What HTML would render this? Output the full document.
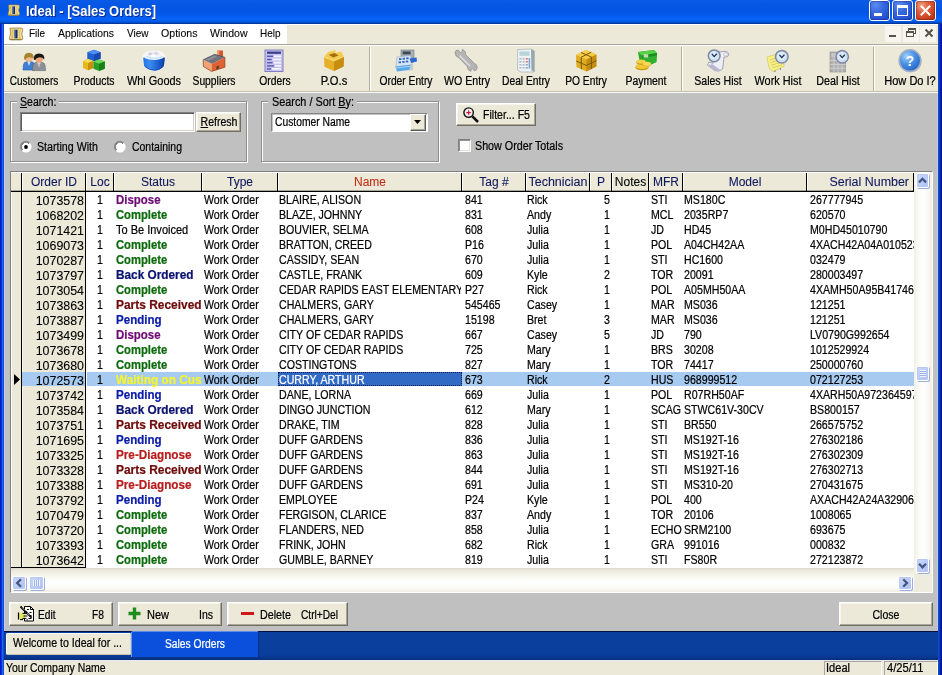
<!DOCTYPE html>
<html><head><meta charset="utf-8"><title>Ideal - [Sales Orders]</title>
<style>
html,body{margin:0;padding:0}
body{width:942px;height:675px;overflow:hidden;position:relative;background:#C0C0C0;font-family:"Liberation Sans",sans-serif;color:#000}
.a{position:absolute;box-sizing:border-box}
.t{position:absolute;white-space:nowrap;box-sizing:border-box;-webkit-text-stroke:0.22px}
u{text-decoration:underline}
svg{position:absolute;overflow:visible}
#root{position:absolute;left:0;top:0;width:942px;height:675px;overflow:hidden;will-change:transform}

.btn{position:absolute;box-sizing:border-box;background:#ECE9D8;border:1px solid;border-color:#fff #716F64 #716F64 #fff;box-shadow:inset -1px -1px 0 #ACA899, inset 1px 1px 0 #F6F5EE}
.sunk{position:absolute;box-sizing:border-box;border:1px solid;border-color:#808080 #fff #fff #808080;box-shadow:inset 1px 1px 0 #5C5C5C, inset -1px -1px 0 #D4D0C8}
.grp{position:absolute;box-sizing:border-box;border:1px solid #8E8E8E;box-shadow:1px 1px 0 #fff, inset 1px 1px 0 #fff}
.hc{position:absolute;box-sizing:border-box;background:#ECE9D8;border-right:1px solid #000;border-left:1px solid #fff;border-top:1px solid #fff;top:172px;height:18px}

</style></head><body><div id="root">
<div class="a" style="left:0px;top:0px;width:942px;height:24px;background:linear-gradient(to bottom,#0A5BE6 0%,#0557E4 20%,#0355E3 45%,#0458EC 60%,#0662F8 78%,#0660F0 86%,#0450D2 93%,#013DA5 97%,#002E8E 100%);"></div>
<div class="a" style="left:0px;top:24px;width:1px;height:651px;background:#0019CF;"></div>
<div class="a" style="left:1px;top:24px;width:1px;height:651px;background:#0A34D8;"></div>
<div class="a" style="left:2px;top:24px;width:1px;height:651px;background:#1E64F0;"></div>
<div class="a" style="left:3px;top:24px;width:1px;height:651px;background:#1050C4;"></div>
<div class="a" style="left:938px;top:24px;width:1px;height:651px;background:#1648C2;"></div>
<div class="a" style="left:939px;top:24px;width:1px;height:651px;background:#0A3CC8;"></div>
<div class="a" style="left:940px;top:24px;width:1px;height:651px;background:#0020AE;"></div>
<div class="a" style="left:941px;top:24px;width:1px;height:651px;background:#001498;"></div>
<div class="a" style="left:4px;top:24px;width:934px;height:20px;background:#ECE9D8;"></div>
<div class="a" style="left:4px;top:24px;width:283px;height:20px;background:#FFFFFF;"></div>
<div class="a" style="left:4px;top:24px;width:934px;height:1px;background:#FFFFFF;"></div>
<div class="a" style="left:4px;top:44px;width:934px;height:1px;background:#ACA899;"></div>
<div class="a" style="left:4px;top:45px;width:934px;height:1px;background:#FFFFFF;"></div>
<div class="a" style="left:4px;top:46px;width:934px;height:45px;background:#ECE9D8;"></div>
<div class="a" style="left:4px;top:91px;width:934px;height:1px;background:#C2BFAC;"></div>
<div class="a" style="left:4px;top:92px;width:934px;height:1px;background:#FAFAF6;"></div>
<div class="a" style="left:4px;top:93px;width:934px;height:538px;background:#C0C0C0;"></div>
<div class="a" style="left:4px;top:93px;width:1px;height:538px;background:#BCCDF0;"></div>
<div class="a" style="left:937px;top:93px;width:1px;height:538px;background:#BCC8F0;"></div>
<div class="grp" style="left:10px;top:101px;width:237px;height:61px"></div>
<div class="grp" style="left:261px;top:101px;width:178px;height:61px"></div>
<div class="a" style="left:4px;top:631px;width:934px;height:1px;background:#06103C;"></div>
<div class="a" style="left:4px;top:632px;width:934px;height:28px;background:linear-gradient(to bottom,#0A3F9E 0,#0A3F9E 82%,#082E7C 100%);"></div>
<div class="a" style="left:4px;top:660px;width:934px;height:15px;background:#ECE9D8;"></div>
<div class="a" style="left:4px;top:660px;width:934px;height:1px;background:#E4E8F0;"></div>
<svg style="left:6.8px;top:4px" width="13.5" height="12.4" viewBox="0 0 16 16" preserveAspectRatio="none">
<path d="M2.2 2.6 Q1 1.2 3 1.2 L13.4 1.2 Q15.6 1.6 14.6 4 L13.8 8 L14.8 12 Q15.4 14.6 13 14.8 L2.8 14.8 Q.4 14.4 1.6 12 L2.4 8 Z" fill="#F0E0A0" stroke="#9C8440" stroke-width=".9"/>
<path d="M3.4 2.6 L5.6 2.2 L5.2 13.8 L3 13.4 L3.8 8 Z" fill="#E0C050"/>
<path d="M10.4 2.2 L12.8 2.6 L12.2 8 L13 13.4 L10.8 13.8 Z" fill="#E8CC68"/>
<rect x="6" y="2.4" width="4" height="11.2" fill="#FBF4D4"/>
<rect x="6.4" y="3" width="3.2" height="10" fill="#1C2C64"/>
<rect x="7" y="3.6" width="1" height="8.8" fill="#3C5C9C"/>
<path d="M2 14.2 H13.6" stroke="#7C6828" stroke-width=".8"/>
</svg>
<div class="t" style="top:2.77px;font-size:14px;line-height:17px;color:#fff;font-weight:bold;left:26.3px;transform-origin:0 50%;transform:scaleX(0.9282);text-shadow:1px 1px 0 #0A2A8A;-webkit-text-stroke:0;">Ideal - [Sales Orders]</div>
<div class="a" style="left:869px;top:0px;width:21px;height:21px;border:1px solid #fff;border-radius:3px;background:radial-gradient(circle at 30% 20%,#5C8CF0 0%,#3768E0 40%,#2350D0 80%,#1C46C0 100%);box-shadow:inset 0 0 1px 1px rgba(0,0,60,.25)"></div>
<div class="a" style="left:892px;top:0px;width:21px;height:21px;border:1px solid #fff;border-radius:3px;background:radial-gradient(circle at 30% 20%,#5C8CF0 0%,#3768E0 40%,#2350D0 80%,#1C46C0 100%);box-shadow:inset 0 0 1px 1px rgba(0,0,60,.25)"></div>
<div class="a" style="left:915px;top:0px;width:21px;height:21px;border:1px solid #fff;border-radius:3px;background:radial-gradient(circle at 30% 25%,#F0A080 0%,#E0603C 35%,#C83C18 75%,#B03010 100%);box-shadow:inset 0 0 1px 1px rgba(0,0,60,.25)"></div>
<div class="a" style="left:874px;top:13px;width:8px;height:3px;background:#fff;"></div>
<div class="a" style="left:897px;top:5px;width:11px;height:11px;border:1px solid #fff;border-top:3px solid #fff;"></div>
<svg style="left:915px;top:0px" width="21" height="21" viewBox="0 0 21 21"><path d="M5.8 5.8 L15.2 15.2 M15.2 5.8 L5.8 15.2" stroke="#fff" stroke-width="2" stroke-linecap="butt"/></svg>
<svg style="left:8px;top:27px" width="16" height="14" viewBox="0 0 16 16" preserveAspectRatio="none">
<path d="M2.2 2.6 Q1 1.2 3 1.2 L13.4 1.2 Q15.6 1.6 14.6 4 L13.8 8 L14.8 12 Q15.4 14.6 13 14.8 L2.8 14.8 Q.4 14.4 1.6 12 L2.4 8 Z" fill="#F0E0A0" stroke="#9C8440" stroke-width=".9"/>
<path d="M3.4 2.6 L5.6 2.2 L5.2 13.8 L3 13.4 L3.8 8 Z" fill="#E0C050"/>
<path d="M10.4 2.2 L12.8 2.6 L12.2 8 L13 13.4 L10.8 13.8 Z" fill="#E8CC68"/>
<rect x="6" y="2.4" width="4" height="11.2" fill="#FBF4D4"/>
<rect x="6.4" y="3" width="3.2" height="10" fill="#1C2C64"/>
<rect x="7" y="3.6" width="1" height="8.8" fill="#3C5C9C"/>
<path d="M2 14.2 H13.6" stroke="#7C6828" stroke-width=".8"/>
</svg>
<div class="t" style="top:26.36px;font-size:11px;line-height:14px;left:29px;transform-origin:0 50%;transform:scaleX(0.9028);-webkit-text-stroke:0.1px;">File</div>
<div class="t" style="top:26.36px;font-size:11px;line-height:14px;left:58px;transform-origin:0 50%;transform:scaleX(0.9442);-webkit-text-stroke:0.1px;">Applications</div>
<div class="t" style="top:26.36px;font-size:11px;line-height:14px;left:126.5px;transform-origin:0 50%;transform:scaleX(0.9093);-webkit-text-stroke:0.1px;">View</div>
<div class="t" style="top:26.36px;font-size:11px;line-height:14px;left:160.5px;transform-origin:0 50%;transform:scaleX(0.9629);-webkit-text-stroke:0.1px;">Options</div>
<div class="t" style="top:26.36px;font-size:11px;line-height:14px;left:209.5px;transform-origin:0 50%;transform:scaleX(0.9585);-webkit-text-stroke:0.1px;">Window</div>
<div class="t" style="top:26.36px;font-size:11px;line-height:14px;left:259.5px;transform-origin:0 50%;transform:scaleX(0.9062);-webkit-text-stroke:0.1px;">Help</div>
<div class="a" style="left:885px;top:26px;width:16px;height:16px;background:#F6F5EF;"></div>
<div class="a" style="left:903px;top:26px;width:16px;height:16px;background:#F6F5EF;"></div>
<div class="a" style="left:920px;top:26px;width:16px;height:16px;background:#F6F5EF;"></div>
<div class="a" style="left:889px;top:35px;width:7px;height:2px;background:#55534A;"></div>
<div class="a" style="left:908px;top:28px;width:8px;height:6px;border:1px solid #55534A;border-top-width:2px;"></div>
<div class="a" style="left:906px;top:31px;width:8px;height:6px;border:1px solid #55534A;border-top-width:2px;background:#F6F5EF;"></div>
<svg style="left:921px;top:25px" width="16" height="16" viewBox="0 0 16 16"><path d="M4.5 4.5 L11.5 11.5 M11.5 4.5 L4.5 11.5" stroke="#55534A" stroke-width="2"/></svg>
<div class="a" style="left:369px;top:47px;width:1px;height:44px;background:#B4B19E;"></div>
<div class="a" style="left:370px;top:47px;width:1px;height:44px;background:#FFFFFF;"></div>
<div class="a" style="left:681px;top:47px;width:1px;height:44px;background:#B4B19E;"></div>
<div class="a" style="left:682px;top:47px;width:1px;height:44px;background:#FFFFFF;"></div>
<div class="a" style="left:873px;top:47px;width:1px;height:44px;background:#B4B19E;"></div>
<div class="a" style="left:874px;top:47px;width:1px;height:44px;background:#FFFFFF;"></div>
<div class="t" style="top:73.53px;font-size:12px;line-height:15px;left:-116px;width:300px;text-align:center;transform-origin:50% 50%;transform:scaleX(0.8360);">Customers</div>
<div class="t" style="top:73.53px;font-size:12px;line-height:15px;left:-56px;width:300px;text-align:center;transform-origin:50% 50%;transform:scaleX(0.8658);">Products</div>
<div class="t" style="top:73.53px;font-size:12px;line-height:15px;left:3.5px;width:300px;text-align:center;transform-origin:50% 50%;transform:scaleX(0.9098);">Whl Goods</div>
<div class="t" style="top:73.53px;font-size:12px;line-height:15px;left:64px;width:300px;text-align:center;transform-origin:50% 50%;transform:scaleX(0.8595);">Suppliers</div>
<div class="t" style="top:73.53px;font-size:12px;line-height:15px;left:124.5px;width:300px;text-align:center;transform-origin:50% 50%;transform:scaleX(0.8589);">Orders</div>
<div class="t" style="top:73.53px;font-size:12px;line-height:15px;left:184px;width:300px;text-align:center;transform-origin:50% 50%;transform:scaleX(0.9311);">P.O.s</div>
<div class="t" style="top:73.53px;font-size:12px;line-height:15px;left:256px;width:300px;text-align:center;transform-origin:50% 50%;transform:scaleX(0.8546);">Order Entry</div>
<div class="t" style="top:73.53px;font-size:12px;line-height:15px;left:317px;width:300px;text-align:center;transform-origin:50% 50%;transform:scaleX(0.8845);">WO Entry</div>
<div class="t" style="top:73.53px;font-size:12px;line-height:15px;left:376px;width:300px;text-align:center;transform-origin:50% 50%;transform:scaleX(0.8568);">Deal Entry</div>
<div class="t" style="top:73.53px;font-size:12px;line-height:15px;left:436px;width:300px;text-align:center;transform-origin:50% 50%;transform:scaleX(0.8525);">PO Entry</div>
<div class="t" style="top:73.53px;font-size:12px;line-height:15px;left:495.5px;width:300px;text-align:center;transform-origin:50% 50%;transform:scaleX(0.8658);">Payment</div>
<div class="t" style="top:73.53px;font-size:12px;line-height:15px;left:568px;width:300px;text-align:center;transform-origin:50% 50%;transform:scaleX(0.8793);">Sales Hist</div>
<div class="t" style="top:73.53px;font-size:12px;line-height:15px;left:627.5px;width:300px;text-align:center;transform-origin:50% 50%;transform:scaleX(0.9077);">Work Hist</div>
<div class="t" style="top:73.53px;font-size:12px;line-height:15px;left:688px;width:300px;text-align:center;transform-origin:50% 50%;transform:scaleX(0.8936);">Deal Hist</div>
<div class="t" style="top:73.53px;font-size:12px;line-height:15px;left:760px;width:300px;text-align:center;transform-origin:50% 50%;transform:scaleX(0.9193);">How Do I?</div>
<svg style="left:0;top:0" width="942" height="92" viewBox="0 0 942 92"><g>
<path d="M23 70 L23.5 64.5 Q24 62 27 61.5 L31 61.5 Q34 62 34.5 64.5 L35 70 Z" fill="#3F7FD8" stroke="#2458A8" stroke-width=".6"/>
<path d="M27.5 62 L29 66 L30.5 62 Z" fill="#CFE0F8"/>
<circle cx="29" cy="58" r="3.9" fill="#F2B98C"/>
<path d="M24.2 59.6 Q23.4 52.8 29 52.8 Q34.2 52.8 33.6 58.8 Q31.6 56.8 28.6 57.2 Q26.4 57.4 25.6 59.8 Z" fill="#A8842C"/>
<path d="M32.5 70.6 L33 65 Q33.6 62.6 36.5 62.2 L41.5 62.2 Q44.6 62.6 45 65 L45.5 70.6 Z" fill="#8C9098" stroke="#60646C" stroke-width=".6"/>
<path d="M37.3 62.6 L39 67.5 L40.7 62.6 Z" fill="#F4F4F4"/><path d="M38.6 63.5 L39 67 L39.4 63.5 Z" fill="#B02020"/>
<circle cx="39" cy="58.6" r="4.2" fill="#EFA57C"/>
<path d="M33.9 59.8 Q33.2 53.4 39 53.4 Q45 53.4 44.3 59.6 Q42.4 57 38.8 57.4 Q36 57.6 35.2 60 Z" fill="#181818"/>
</g><g>
<path d="M87.3 52.2 L94 49.8 L100.6 52.2 L100.6 58.8 L94 61.2 L87.3 58.8 Z" fill="#1F5FD0"/>
<path d="M87.3 52.2 L94 49.8 L100.6 52.2 L94 54.4 Z" fill="#4F8FF0"/>
<path d="M94 54.4 L100.6 52.2 L100.6 58.8 L94 61.2 Z" fill="#1848B0"/>
<path d="M83 61 L88 59 L93.2 61 L93.2 68 L88 70.2 L83 68 Z" fill="#E8B818"/>
<path d="M83 61 L88 59 L93.2 61 L88 63 Z" fill="#F8DC58"/>
<path d="M88 63 L93.2 61 L93.2 68 L88 70.2 Z" fill="#C89008"/>
<path d="M93.4 61.6 L99 59.6 L104.8 61.6 L104.8 68.8 L99 71 L93.4 68.8 Z" fill="#28A028"/>
<path d="M93.4 61.6 L99 59.6 L104.8 61.6 L99 63.8 Z" fill="#68D858"/>
<path d="M99 63.8 L104.8 61.6 L104.8 68.8 L99 71 Z" fill="#188018"/>
</g><g>
<defs><linearGradient id="tubg" x1="0" x2="1" y1="0" y2="0"><stop offset="0" stop-color="#2474E4"/><stop offset=".3" stop-color="#3C8CF0"/><stop offset=".7" stop-color="#1C60D0"/><stop offset="1" stop-color="#0C3C98"/></linearGradient></defs>
<path d="M142.4 58 Q142.6 53 148 51.4 Q154 49.4 160.4 51.4 Q165.6 53 165.6 58 L164.8 66.6 Q159 72 154 71.2 Q148 71 143.4 66.6 Z" fill="#FFFFFF" opacity=".75"/>
<path d="M143.2 58.6 Q143 57 144.6 57 L163.6 57 Q165 57 164.9 58.6 L164 66 Q159 71.2 154 70.6 Q148 70.4 144 66 Z" fill="url(#tubg)"/>
<path d="M144.4 58 Q144 54 148 52.2 Q154 50 160 52.2 Q164 54 163.6 58 Q154 61.8 144.4 58 Z" fill="#F2F5FA"/>
<path d="M146 56.4 Q154 60 162.4 56.6" fill="none" stroke="#BFE0FA" stroke-width="1.2"/>
<ellipse cx="150.4" cy="54" rx="2.4" ry="1.4" fill="#D6CCD8"/><ellipse cx="156" cy="53.4" rx="2.6" ry="1.5" fill="#DCD4E0"/><ellipse cx="153.4" cy="55.8" rx="2.6" ry="1.2" fill="#FFFFFF"/>
<path d="M145 66.4 Q149 70 154 70.2 Q159 70.6 163.4 66.6" fill="none" stroke="#0A3A94" stroke-width=".8" opacity=".7"/>
</g><g>
<path d="M217 50.4 L223 50.4 L223 58 L217 56.6 Z" fill="#D4542C"/><path d="M217 50.4 L219.4 50.4 L219.4 57 L217 56.6 Z" fill="#F09468"/>
<path d="M203.2 59.8 L214.7 54.3 L224.9 57.3 L212 63.9 Z" fill="#70727C"/>
<path d="M206 59.6 L214.4 55.6 L217 56.4 L208.6 60.8 Z" fill="#9498A8" opacity=".8"/>
<path d="M203.2 59.8 L212 63.9 L211.6 71.4 L203.4 66.5 Z" fill="#F2A272"/>
<path d="M212 63.9 L224.9 57.3 L224.9 67.2 L211.6 71.4 Z" fill="#DE6234"/>
<path d="M216.4 66.4 L218.8 65.4 L218.8 68.6 L216.4 69.8 Z" fill="#5A4418"/>
<path d="M203.2 59.8 L203.4 66.5 L211.6 71.4 L224.9 67.2 L224.9 57.3" fill="none" stroke="#8C3A1C" stroke-width=".7"/>
<path d="M203.2 59.8 L214.7 54.3 L224.9 57.3" fill="none" stroke="#4C4C54" stroke-width=".7"/>
</g><g>
<rect x="265" y="50" width="18" height="21.5" fill="#C4C0F0" stroke="#8480C0" stroke-width="1"/>
<rect x="267" y="51.6" width="14" height="2.2" fill="#3C3C88"/>
<g fill="#5858A8"><rect x="267" y="55.6" width="6" height="1.4"/><rect x="267" y="58.8" width="4.6" height="1.4"/><rect x="267" y="62" width="5.6" height="1.4"/><rect x="267" y="65.2" width="7" height="1.4"/><rect x="267" y="68.2" width="4" height="1.4"/></g>
<g fill="#F4F4FF"><rect x="274" y="55.4" width="7" height="1.8"/><rect x="272.6" y="58.6" width="8.4" height="1.8"/><rect x="273.6" y="61.8" width="7.4" height="1.8"/><rect x="275" y="65" width="6" height="1.8"/><rect x="272" y="68" width="9" height="1.8"/></g>
</g><g>
<path d="M324 57 L334 61 L344 56.4 L343.6 66.4 L334 71 L324.4 66.8 Z" fill="#E8B028"/>
<path d="M334 61 L344 56.4 L343.6 66.4 L334 71 Z" fill="#C88C10"/>
<path d="M324 57 L328 52 L336 50 L334.6 53 L341 51.6 L344 56.4 L334 61 Z" fill="#F4CC50"/>
<path d="M328.6 54.8 L334.6 53 L338.6 55.4 L333.2 57.6 Z" fill="#A87008"/>
<path d="M324 57 L334 61 L344 56.4" fill="none" stroke="#F8E088" stroke-width=".8"/>
</g><g>
<rect x="401" y="50" width="13" height="8" fill="#A8B0B8" stroke="#70787C" stroke-width=".6"/>
<rect x="402.6" y="51.4" width="8" height="3" fill="#404858"/>
<path d="M397 57 L410.5 55.5 L412.6 65 L396 67 Z" fill="#D8E4F0" stroke="#90A0B0" stroke-width=".5"/>
<g fill="#2C68C8"><rect x="399" y="58.2" width="2.4" height="1.8"/><rect x="402.6" y="57.8" width="2.4" height="1.8"/><rect x="406.2" y="57.4" width="2.4" height="1.8"/><rect x="398.6" y="61.4" width="2.4" height="1.8"/><rect x="402.2" y="61" width="2.4" height="1.8"/><rect x="405.8" y="60.6" width="2.4" height="1.8"/></g>
<path d="M395.4 66.4 L411.4 64.6 L412.6 69.4 L397 71.4 Z" fill="#58A8E8"/>
<path d="M396 68 L411.8 66" stroke="#A8D4F8" stroke-width="1"/>
<path d="M409.6 58.6 L416.6 57.4 L417 61.6 L411 63 Z" fill="#2C68D0"/>
<path d="M411 63.4 Q414 64 413 70 L409 71 Z" fill="#C8CCD0"/>
</g><g>
<path d="M455 52.6 Q455 50.4 458 50 L460.6 52.4 L462.8 51 L462 49.6 Q466 50.4 465.6 54.6 L474.6 63.6 Q477 64 477.2 67.6 Q477 70.6 474.6 71 L472.6 68.8 L470.6 70 L471 71.4 Q467.4 70.6 467.4 66.6 L458.6 57.6 Q455.4 57 455 52.6 Z" fill="#B4B4B4" stroke="#8C8C8C" stroke-width=".7"/>
<path d="M459.6 55.6 L470 66" stroke="#DCDCDC" stroke-width="1.6"/>
</g><g>
<path d="M517.6 49.6 L531 49 L534.4 51 L534.4 72 L521 72 L517.6 70 Z" fill="#EEF2F4" stroke="#A4B0B4" stroke-width=".7"/>
<path d="M531 49 L534.4 51 L534.4 72 L531.4 70.4 Z" fill="#98A8B0"/>
<rect x="519.4" y="51.4" width="10" height="4.4" fill="#B8D4D8"/>
<g fill="#B0BCC8"><rect x="519.4" y="58" width="2" height="1.6"/><rect x="522.6" y="58" width="2" height="1.6"/><rect x="519.4" y="61" width="2" height="1.6"/><rect x="522.6" y="61" width="2" height="1.6"/><rect x="519.4" y="64" width="2" height="1.6"/><rect x="522.6" y="64" width="2" height="1.6"/><rect x="519.4" y="67" width="2" height="1.6"/><rect x="522.6" y="67" width="2" height="1.6"/></g>
<g fill="#D87878"><rect x="525.8" y="58" width="2" height="1.6"/><rect x="525.8" y="61" width="2" height="1.6"/></g>
<g fill="#88A8D0"><rect x="525.8" y="64" width="2" height="1.6"/><rect x="525.8" y="67" width="2" height="1.6"/><rect x="528.6" y="58" width="1.6" height="10.6"/></g>
</g><g>
<path d="M576 55 L586 50 L596.4 54.4 L596.4 66.6 L586.4 71.4 L576.4 67 Z" fill="#E0AC20"/>
<path d="M576 55 L586 50 L596.4 54.4 L586.4 59.4 Z" fill="#F4CC48"/>
<path d="M586.4 59.4 L596.4 54.4 L596.4 66.6 L586.4 71.4 Z" fill="#C48C10"/>
<path d="M581 52.5 L591.4 57 L591.4 69 M591.2 52.2 L581.2 57.2 L581.4 69.2 M576.2 61 L586.4 65.4 L596.4 60.6" fill="none" stroke="#7C5808" stroke-width="1"/>
</g><g>
<path d="M638 52 L654 50 L657 53 L656.4 62 L650 65 L640 63.6 Z" fill="#28A828"/>
<path d="M638 52 L654 50 L657 53 L642 55.6 Z" fill="#58D048"/>
<path d="M642 55.6 L657 53 L656.4 57 L642.6 59.6 Z" fill="#1C8C1C"/>
<path d="M643 58 L656.4 55.6 L656.4 62 L650 65 L644 63 Z" fill="#30B030"/>
<rect x="643.6" y="54.2" width="4.6" height="3.4" fill="#D8E8D0" opacity=".85"/>
<ellipse cx="642" cy="67.6" rx="6.6" ry="2.6" fill="#C89410"/><ellipse cx="642" cy="66.4" rx="6.6" ry="2.6" fill="#F0C838"/>
<ellipse cx="641" cy="62.6" rx="4.6" ry="2.2" fill="#C89410"/><ellipse cx="641" cy="61.6" rx="4.6" ry="2.2" fill="#F4D048"/>
<ellipse cx="647" cy="64.6" rx="4" ry="2" fill="#D8A820"/><ellipse cx="647" cy="63.8" rx="4" ry="2" fill="#F8D858"/>
</g><g>
<path d="M713 52.4 L725 51.4 Q729.4 51.6 728.6 55.4 Q727.6 57.6 724 57 L722.6 69 Q719 72.4 714.6 70.6 L707.4 65 L709 62 L713 63.4 Z" fill="#EEEEF6" stroke="#9090A8" stroke-width=".8"/>
<path d="M707.4 65 L714.6 70.6 Q718 71.6 720 69.6 L712.4 64.2 Z" fill="#B8B8D0"/>
<ellipse cx="725.6" cy="54.4" rx="2" ry="1.6" fill="#F8F8FC" stroke="#9C9CB4" stroke-width=".6"/>
<circle cx="714.2" cy="55.8" r="5.9" fill="#C8DEEE" stroke="#8088A6" stroke-width="1.5"/><circle cx="713.8000000000001" cy="55.4" r="3.9000000000000004" fill="#DCEAF6"/><path d="M711.8000000000001 53.8 L714.2 56.599999999999994 L716.8000000000001 53.8" fill="none" stroke="#1C2C50" stroke-width="1.3"/></g><g>
<path d="M767 57 L779 53.6 L784.4 66 L773 71.6 Q769.6 70 768.6 66 Z" fill="#F8F088" stroke="#C8C058" stroke-width=".6"/>
<path d="M769.6 60 L779 57.2 M770.4 62.6 L780.4 59.6 M771.2 65.2 L781.6 62.2 M772.4 67.8 L782.4 64.8" stroke="#C8BC50" stroke-width=".7"/>
<circle cx="775" cy="71" r=".6" fill="#222"/><circle cx="780.4" cy="69" r=".6" fill="#222"/>
<circle cx="781.8" cy="56.8" r="6.3" fill="#C8DEEE" stroke="#8088A6" stroke-width="1.5"/><circle cx="781.4" cy="56.4" r="4.3" fill="#DCEAF6"/><path d="M779.4 54.8 L781.8 57.599999999999994 L784.4 54.8" fill="none" stroke="#1C2C50" stroke-width="1.3"/></g><g>
<rect x="830" y="52" width="15.6" height="20" fill="#B0B0B0" stroke="#8C8C8C" stroke-width=".6"/>
<g stroke="#D4D4D4" stroke-width=".8"><path d="M830 60.5 H845.6 M830 64.4 H845.6 M830 68.2 H845.6 M834 56 V72 M838 60 V72 M842 60 V72"/></g>
<rect x="831.4" y="53.4" width="6" height="3.6" fill="#C8C8C8"/>
<circle cx="842.2" cy="56.8" r="6.2" fill="#C8DEEE" stroke="#8088A6" stroke-width="1.5"/><circle cx="841.8000000000001" cy="56.4" r="4.2" fill="#DCEAF6"/><path d="M839.8000000000001 54.8 L842.2 57.599999999999994 L844.8000000000001 54.8" fill="none" stroke="#1C2C50" stroke-width="1.3"/></g><g>
<defs><radialGradient id="hg" cx="35%" cy="30%" r="75%"><stop offset="0" stop-color="#A4D0FA"/><stop offset=".5" stop-color="#4A90E4"/><stop offset="1" stop-color="#2462C4"/></radialGradient></defs>
<circle cx="910.4" cy="61.4" r="11.2" fill="#9CA4B0" opacity=".55"/>
<circle cx="910" cy="60.6" r="10.8" fill="url(#hg)" stroke="#A0AEC8" stroke-width="1.6"/>
<text x="910" y="65.6" font-family="Liberation Sans" font-weight="bold" font-size="14" fill="#fff" text-anchor="middle">?</text>
</g></svg>
<div class="a" style="left:17px;top:96px;width:42px;height:12px;background:#C0C0C0;"></div>
<div class="t" style="top:94.53px;font-size:12px;line-height:15px;left:20px;transform-origin:0 50%;transform:scaleX(0.8777);"><u>S</u>earch:</div>
<div class="a" style="left:268px;top:96px;width:89px;height:12px;background:#C0C0C0;"></div>
<div class="t" style="top:94.53px;font-size:12px;line-height:15px;left:271.7px;transform-origin:0 50%;transform:scaleX(0.9040);">Search / Sort <u>B</u>y:</div>
<div class="sunk" style="left:20px;top:112px;width:175px;height:20px;background:#fff"></div>
<div class="btn" style="left:196px;top:112px;width:45px;height:20px"></div>
<div class="t" style="top:114.53px;font-size:12px;line-height:15px;left:68.5px;width:300px;text-align:center;transform-origin:50% 50%;transform:scaleX(0.8806);"><u>R</u>efresh</div>
<svg style="left:20px;top:141px" width="12" height="12" viewBox="0 0 12 12"><circle cx="6" cy="6" r="5.6" fill="#FFFFFF"/><path d="M1.6 10 A5.6 5.6 0 0 1 10 1.6 L8.6 3 A3.8 3.8 0 0 0 3 8.6 Z" fill="#8C8C8C"/><path d="M2.6 9 A4.5 4.5 0 0 1 9 2.6 L8.6 3 A3.8 3.8 0 0 0 3 8.6 Z" fill="#5A5A5A"/><circle cx="6" cy="6" r="3.8" fill="#fff"/><circle cx="6" cy="6" r="1.9" fill="#000"/></svg>
<svg style="left:114px;top:141px" width="12" height="12" viewBox="0 0 12 12"><circle cx="6" cy="6" r="5.6" fill="#FFFFFF"/><path d="M1.6 10 A5.6 5.6 0 0 1 10 1.6 L8.6 3 A3.8 3.8 0 0 0 3 8.6 Z" fill="#8C8C8C"/><path d="M2.6 9 A4.5 4.5 0 0 1 9 2.6 L8.6 3 A3.8 3.8 0 0 0 3 8.6 Z" fill="#5A5A5A"/><circle cx="6" cy="6" r="3.8" fill="#fff"/></svg>
<div class="t" style="top:139.53px;font-size:12px;line-height:15px;left:37px;transform-origin:0 50%;transform:scaleX(0.8880);">Starting With</div>
<div class="t" style="top:139.53px;font-size:12px;line-height:15px;left:131.5px;transform-origin:0 50%;transform:scaleX(0.8715);">Containing</div>
<div class="a" style="left:271px;top:113px;width:157px;height:19px;background:#fff;border:1px solid;border-color:#858585 #fff #fff #858585;box-shadow:inset 1px 1px 0 #C4C4C4"></div>
<div class="t" style="top:115.03px;font-size:12px;line-height:15px;left:275px;transform-origin:0 50%;transform:scaleX(0.8585);">Customer Name</div>
<div class="a" style="left:410px;top:114px;width:16px;height:17px;background:#ECE9D8;border:1px solid;border-color:#fff #5A5A5A #5A5A5A #fff;box-shadow:inset -1px -1px 0 #A8A698"></div>
<svg style="left:414px;top:120px" width="7" height="4" viewBox="0 0 7 4"><path d="M0 0 H7 L3.5 4 Z" fill="#000"/></svg>
<div class="btn" style="left:456px;top:103px;width:80px;height:23px"></div>
<svg style="left:462px;top:106px" width="18" height="18" viewBox="0 0 18 18"><circle cx="6.6" cy="6.6" r="4.7" fill="#F6ECF0" stroke="#101010" stroke-width="1.4"/><path d="M4.4 6.6 H8.8 M6.6 4.4 V8.8" stroke="#C01838" stroke-width="1.2"/><path d="M10.4 10.4 L16 16" stroke="#101010" stroke-width="2.6" stroke-linecap="butt"/></svg>
<div class="t" style="top:107.93px;font-size:12px;line-height:15px;left:483px;transform-origin:0 50%;transform:scaleX(0.8811);">Filter... F5</div>
<div class="a" style="left:458px;top:139px;width:13px;height:13px;background:#fff;border:1px solid;border-color:#808080 #fff #fff #808080;box-shadow:inset 1px 1px 0 #909090, inset -1px -1px 0 #E4E2DA"></div>
<div class="t" style="top:138.53px;font-size:12px;line-height:15px;left:474.5px;transform-origin:0 50%;transform:scaleX(0.8935);">Show Order Totals</div>
<div class="a" style="left:10px;top:171px;width:923px;height:422px;background:#fff;border:1px solid;border-color:#808080 #fff #fff #808080;"></div>
<div class="a" style="left:11px;top:172px;width:10px;height:396px;background:#ECE9D8;"></div>
<div class="a" style="left:22px;top:172px;width:63px;height:396px;background:#ECE9D8;"></div>
<div class="a" style="left:11px;top:172px;width:1px;height:395px;background:#fff;"></div>
<div class="a" style="left:22px;top:192px;width:1px;height:375px;background:#F8F7F0;"></div>
<div class="a" style="left:11px;top:172px;width:903px;height:18px;background:#ECE9D8;"></div>
<div class="a" style="left:11px;top:190px;width:903px;height:1px;background:#A8A698;"></div>
<div class="a" style="left:11px;top:191px;width:903px;height:1px;background:#000;"></div>
<div class="a" style="left:21px;top:172px;width:1px;height:19px;background:#000;"></div>
<div class="a" style="left:22px;top:172px;width:1px;height:18px;background:#fff;"></div>
<div class="a" style="left:85px;top:172px;width:1px;height:19px;background:#000;"></div>
<div class="a" style="left:86px;top:172px;width:1px;height:18px;background:#fff;"></div>
<div class="a" style="left:113px;top:172px;width:1px;height:19px;background:#000;"></div>
<div class="a" style="left:114px;top:172px;width:1px;height:18px;background:#fff;"></div>
<div class="a" style="left:201px;top:172px;width:1px;height:19px;background:#000;"></div>
<div class="a" style="left:202px;top:172px;width:1px;height:18px;background:#fff;"></div>
<div class="a" style="left:277px;top:172px;width:1px;height:19px;background:#000;"></div>
<div class="a" style="left:278px;top:172px;width:1px;height:18px;background:#fff;"></div>
<div class="a" style="left:461px;top:172px;width:1px;height:19px;background:#000;"></div>
<div class="a" style="left:462px;top:172px;width:1px;height:18px;background:#fff;"></div>
<div class="a" style="left:525px;top:172px;width:1px;height:19px;background:#000;"></div>
<div class="a" style="left:526px;top:172px;width:1px;height:18px;background:#fff;"></div>
<div class="a" style="left:589px;top:172px;width:1px;height:19px;background:#000;"></div>
<div class="a" style="left:590px;top:172px;width:1px;height:18px;background:#fff;"></div>
<div class="a" style="left:611px;top:172px;width:1px;height:19px;background:#000;"></div>
<div class="a" style="left:612px;top:172px;width:1px;height:18px;background:#fff;"></div>
<div class="a" style="left:648px;top:172px;width:1px;height:19px;background:#000;"></div>
<div class="a" style="left:649px;top:172px;width:1px;height:18px;background:#fff;"></div>
<div class="a" style="left:682px;top:172px;width:1px;height:19px;background:#000;"></div>
<div class="a" style="left:683px;top:172px;width:1px;height:18px;background:#fff;"></div>
<div class="a" style="left:806px;top:172px;width:1px;height:19px;background:#000;"></div>
<div class="a" style="left:807px;top:172px;width:1px;height:18px;background:#fff;"></div>
<div class="a" style="left:913px;top:172px;width:1px;height:19px;background:#000;"></div>
<div class="a" style="left:914px;top:172px;width:1px;height:18px;background:#fff;"></div>
<div class="a" style="left:11px;top:172px;width:903px;height:1px;background:#fff;"></div>
<div class="a" style="left:21px;top:190px;width:1px;height:378px;background:#000;"></div>
<div class="a" style="left:85px;top:190px;width:1px;height:378px;background:#000;"></div>
<div class="a" style="left:11px;top:567px;width:75px;height:1px;background:#000;"></div>
<div class="t" style="top:174.83px;font-size:12px;line-height:15px;color:#10185E;left:-96.0px;width:300px;text-align:center;transform-origin:50% 50%;-webkit-text-stroke:0.1px;">Order ID</div>
<div class="t" style="top:174.83px;font-size:12px;line-height:15px;color:#10185E;left:-50.0px;width:300px;text-align:center;transform-origin:50% 50%;-webkit-text-stroke:0.1px;">Loc</div>
<div class="t" style="top:174.83px;font-size:12px;line-height:15px;color:#10185E;left:8.0px;width:300px;text-align:center;transform-origin:50% 50%;-webkit-text-stroke:0.1px;">Status</div>
<div class="t" style="top:174.83px;font-size:12px;line-height:15px;color:#10185E;left:90.0px;width:300px;text-align:center;transform-origin:50% 50%;-webkit-text-stroke:0.1px;">Type</div>
<div class="t" style="top:174.83px;font-size:12px;line-height:15px;color:#C03018;left:220.0px;width:300px;text-align:center;transform-origin:50% 50%;-webkit-text-stroke:0.1px;">Name</div>
<div class="t" style="top:174.83px;font-size:12px;line-height:15px;color:#10185E;left:344.0px;width:300px;text-align:center;transform-origin:50% 50%;-webkit-text-stroke:0.1px;">Tag #</div>
<div class="t" style="top:174.83px;font-size:12px;line-height:15px;color:#10185E;left:408.0px;width:300px;text-align:center;transform-origin:50% 50%;transform:scaleX(1.0406);-webkit-text-stroke:0.1px;">Technician</div>
<div class="t" style="top:174.83px;font-size:12px;line-height:15px;color:#10185E;left:451.0px;width:300px;text-align:center;transform-origin:50% 50%;-webkit-text-stroke:0.1px;">P</div>
<div class="t" style="top:174.83px;font-size:12px;line-height:15px;color:#000000;left:480.5px;width:300px;text-align:center;transform-origin:50% 50%;-webkit-text-stroke:0.1px;">Notes</div>
<div class="t" style="top:174.83px;font-size:12px;line-height:15px;color:#10185E;left:516.0px;width:300px;text-align:center;transform-origin:50% 50%;-webkit-text-stroke:0.1px;">MFR</div>
<div class="t" style="top:174.83px;font-size:12px;line-height:15px;color:#10185E;left:595.0px;width:300px;text-align:center;transform-origin:50% 50%;-webkit-text-stroke:0.1px;">Model</div>
<div class="t" style="top:174.83px;font-size:12px;line-height:15px;color:#10185E;left:609.2px;width:300px;text-align:right;transform-origin:100% 50%;transform:scaleX(1.0366);-webkit-text-stroke:0.1px;">Serial Number</div>
<div class="a" style="left:22px;top:372px;width:63px;height:14px;background:#A6CAF0;"></div>
<div class="a" style="left:87px;top:372px;width:827px;height:14px;background:#A6CAF0;"></div>
<div class="a" style="left:278px;top:372px;width:184px;height:14px;background:#316AC5;outline:1px dotted #0E1E50;outline-offset:-1px;"></div>
<svg style="left:14px;top:374px" width="6" height="11" viewBox="0 0 6 11"><path d="M0 0 L6 5.5 L0 11 Z" fill="#000"/></svg>
<div class="t" style="top:193.83px;font-size:12px;line-height:15px;left:-216.1px;width:300px;text-align:right;transform-origin:100% 50%;transform:scaleX(1.0339);-webkit-text-stroke:0.1px;">1073578</div>
<div class="t" style="top:192.53px;font-size:12px;line-height:15px;color:#000;left:-50px;width:300px;text-align:center;transform-origin:50% 50%;transform:scaleX(0.8850);">1</div>
<div class="t" style="top:208.83px;font-size:12px;line-height:15px;left:-216.1px;width:300px;text-align:right;transform-origin:100% 50%;transform:scaleX(1.0339);-webkit-text-stroke:0.1px;">1068202</div>
<div class="t" style="top:207.53px;font-size:12px;line-height:15px;color:#000;left:-50px;width:300px;text-align:center;transform-origin:50% 50%;transform:scaleX(0.8850);">1</div>
<div class="t" style="top:223.83px;font-size:12px;line-height:15px;left:-216.1px;width:300px;text-align:right;transform-origin:100% 50%;transform:scaleX(1.0339);-webkit-text-stroke:0.1px;">1071421</div>
<div class="t" style="top:222.53px;font-size:12px;line-height:15px;color:#000;left:-50px;width:300px;text-align:center;transform-origin:50% 50%;transform:scaleX(0.8850);">1</div>
<div class="t" style="top:238.83px;font-size:12px;line-height:15px;left:-216.1px;width:300px;text-align:right;transform-origin:100% 50%;transform:scaleX(1.0339);-webkit-text-stroke:0.1px;">1069073</div>
<div class="t" style="top:237.53px;font-size:12px;line-height:15px;color:#000;left:-50px;width:300px;text-align:center;transform-origin:50% 50%;transform:scaleX(0.8850);">1</div>
<div class="t" style="top:253.83px;font-size:12px;line-height:15px;left:-216.1px;width:300px;text-align:right;transform-origin:100% 50%;transform:scaleX(1.0339);-webkit-text-stroke:0.1px;">1070287</div>
<div class="t" style="top:252.53px;font-size:12px;line-height:15px;color:#000;left:-50px;width:300px;text-align:center;transform-origin:50% 50%;transform:scaleX(0.8850);">1</div>
<div class="t" style="top:268.83px;font-size:12px;line-height:15px;left:-216.1px;width:300px;text-align:right;transform-origin:100% 50%;transform:scaleX(1.0339);-webkit-text-stroke:0.1px;">1073797</div>
<div class="t" style="top:267.53px;font-size:12px;line-height:15px;color:#000;left:-50px;width:300px;text-align:center;transform-origin:50% 50%;transform:scaleX(0.8850);">1</div>
<div class="t" style="top:283.83px;font-size:12px;line-height:15px;left:-216.1px;width:300px;text-align:right;transform-origin:100% 50%;transform:scaleX(1.0339);-webkit-text-stroke:0.1px;">1073054</div>
<div class="t" style="top:282.53px;font-size:12px;line-height:15px;color:#000;left:-50px;width:300px;text-align:center;transform-origin:50% 50%;transform:scaleX(0.8850);">1</div>
<div class="t" style="top:298.83px;font-size:12px;line-height:15px;left:-216.1px;width:300px;text-align:right;transform-origin:100% 50%;transform:scaleX(1.0339);-webkit-text-stroke:0.1px;">1073863</div>
<div class="t" style="top:297.53px;font-size:12px;line-height:15px;color:#000;left:-50px;width:300px;text-align:center;transform-origin:50% 50%;transform:scaleX(0.8850);">1</div>
<div class="t" style="top:313.83px;font-size:12px;line-height:15px;left:-216.1px;width:300px;text-align:right;transform-origin:100% 50%;transform:scaleX(1.0339);-webkit-text-stroke:0.1px;">1073887</div>
<div class="t" style="top:312.53px;font-size:12px;line-height:15px;color:#000;left:-50px;width:300px;text-align:center;transform-origin:50% 50%;transform:scaleX(0.8850);">1</div>
<div class="t" style="top:328.83px;font-size:12px;line-height:15px;left:-216.1px;width:300px;text-align:right;transform-origin:100% 50%;transform:scaleX(1.0339);-webkit-text-stroke:0.1px;">1073499</div>
<div class="t" style="top:327.53px;font-size:12px;line-height:15px;color:#000;left:-50px;width:300px;text-align:center;transform-origin:50% 50%;transform:scaleX(0.8850);">1</div>
<div class="t" style="top:343.83px;font-size:12px;line-height:15px;left:-216.1px;width:300px;text-align:right;transform-origin:100% 50%;transform:scaleX(1.0339);-webkit-text-stroke:0.1px;">1073678</div>
<div class="t" style="top:342.53px;font-size:12px;line-height:15px;color:#000;left:-50px;width:300px;text-align:center;transform-origin:50% 50%;transform:scaleX(0.8850);">1</div>
<div class="t" style="top:358.83px;font-size:12px;line-height:15px;left:-216.1px;width:300px;text-align:right;transform-origin:100% 50%;transform:scaleX(1.0339);-webkit-text-stroke:0.1px;">1073680</div>
<div class="t" style="top:357.53px;font-size:12px;line-height:15px;color:#000;left:-50px;width:300px;text-align:center;transform-origin:50% 50%;transform:scaleX(0.8850);">1</div>
<div class="t" style="top:373.83px;font-size:12px;line-height:15px;left:-216.1px;width:300px;text-align:right;transform-origin:100% 50%;transform:scaleX(1.0339);-webkit-text-stroke:0.1px;">1072573</div>
<div class="t" style="top:372.53px;font-size:12px;line-height:15px;color:#000;left:-50px;width:300px;text-align:center;transform-origin:50% 50%;transform:scaleX(0.8850);">1</div>
<div class="t" style="top:388.83px;font-size:12px;line-height:15px;left:-216.1px;width:300px;text-align:right;transform-origin:100% 50%;transform:scaleX(1.0339);-webkit-text-stroke:0.1px;">1073742</div>
<div class="t" style="top:387.53px;font-size:12px;line-height:15px;color:#000;left:-50px;width:300px;text-align:center;transform-origin:50% 50%;transform:scaleX(0.8850);">1</div>
<div class="t" style="top:403.83px;font-size:12px;line-height:15px;left:-216.1px;width:300px;text-align:right;transform-origin:100% 50%;transform:scaleX(1.0339);-webkit-text-stroke:0.1px;">1073584</div>
<div class="t" style="top:402.53px;font-size:12px;line-height:15px;color:#000;left:-50px;width:300px;text-align:center;transform-origin:50% 50%;transform:scaleX(0.8850);">1</div>
<div class="t" style="top:418.83px;font-size:12px;line-height:15px;left:-216.1px;width:300px;text-align:right;transform-origin:100% 50%;transform:scaleX(1.0339);-webkit-text-stroke:0.1px;">1073751</div>
<div class="t" style="top:417.53px;font-size:12px;line-height:15px;color:#000;left:-50px;width:300px;text-align:center;transform-origin:50% 50%;transform:scaleX(0.8850);">1</div>
<div class="t" style="top:433.83px;font-size:12px;line-height:15px;left:-216.1px;width:300px;text-align:right;transform-origin:100% 50%;transform:scaleX(1.0339);-webkit-text-stroke:0.1px;">1071695</div>
<div class="t" style="top:432.53px;font-size:12px;line-height:15px;color:#000;left:-50px;width:300px;text-align:center;transform-origin:50% 50%;transform:scaleX(0.8850);">1</div>
<div class="t" style="top:448.83px;font-size:12px;line-height:15px;left:-216.1px;width:300px;text-align:right;transform-origin:100% 50%;transform:scaleX(1.0339);-webkit-text-stroke:0.1px;">1073325</div>
<div class="t" style="top:447.53px;font-size:12px;line-height:15px;color:#000;left:-50px;width:300px;text-align:center;transform-origin:50% 50%;transform:scaleX(0.8850);">1</div>
<div class="t" style="top:463.83px;font-size:12px;line-height:15px;left:-216.1px;width:300px;text-align:right;transform-origin:100% 50%;transform:scaleX(1.0339);-webkit-text-stroke:0.1px;">1073328</div>
<div class="t" style="top:462.53px;font-size:12px;line-height:15px;color:#000;left:-50px;width:300px;text-align:center;transform-origin:50% 50%;transform:scaleX(0.8850);">1</div>
<div class="t" style="top:478.83px;font-size:12px;line-height:15px;left:-216.1px;width:300px;text-align:right;transform-origin:100% 50%;transform:scaleX(1.0339);-webkit-text-stroke:0.1px;">1073388</div>
<div class="t" style="top:477.53px;font-size:12px;line-height:15px;color:#000;left:-50px;width:300px;text-align:center;transform-origin:50% 50%;transform:scaleX(0.8850);">1</div>
<div class="t" style="top:493.83px;font-size:12px;line-height:15px;left:-216.1px;width:300px;text-align:right;transform-origin:100% 50%;transform:scaleX(1.0339);-webkit-text-stroke:0.1px;">1073792</div>
<div class="t" style="top:492.53px;font-size:12px;line-height:15px;color:#000;left:-50px;width:300px;text-align:center;transform-origin:50% 50%;transform:scaleX(0.8850);">1</div>
<div class="t" style="top:508.83px;font-size:12px;line-height:15px;left:-216.1px;width:300px;text-align:right;transform-origin:100% 50%;transform:scaleX(1.0339);-webkit-text-stroke:0.1px;">1070479</div>
<div class="t" style="top:507.53px;font-size:12px;line-height:15px;color:#000;left:-50px;width:300px;text-align:center;transform-origin:50% 50%;transform:scaleX(0.8850);">1</div>
<div class="t" style="top:523.83px;font-size:12px;line-height:15px;left:-216.1px;width:300px;text-align:right;transform-origin:100% 50%;transform:scaleX(1.0339);-webkit-text-stroke:0.1px;">1073720</div>
<div class="t" style="top:522.53px;font-size:12px;line-height:15px;color:#000;left:-50px;width:300px;text-align:center;transform-origin:50% 50%;transform:scaleX(0.8850);">1</div>
<div class="t" style="top:538.83px;font-size:12px;line-height:15px;left:-216.1px;width:300px;text-align:right;transform-origin:100% 50%;transform:scaleX(1.0339);-webkit-text-stroke:0.1px;">1073393</div>
<div class="t" style="top:537.53px;font-size:12px;line-height:15px;color:#000;left:-50px;width:300px;text-align:center;transform-origin:50% 50%;transform:scaleX(0.8850);">1</div>
<div class="t" style="top:553.83px;font-size:12px;line-height:15px;left:-216.1px;width:300px;text-align:right;transform-origin:100% 50%;transform:scaleX(1.0339);-webkit-text-stroke:0.1px;">1073642</div>
<div class="t" style="top:552.53px;font-size:12px;line-height:15px;color:#000;left:-50px;width:300px;text-align:center;transform-origin:50% 50%;transform:scaleX(0.8850);">1</div>
<div class="a" style="left:114px;top:192px;width:88px;height:375px;overflow:hidden">
<div class="t" style="top:0.53px;font-size:12px;line-height:15px;color:#6E0A74;font-weight:bold;left:1.5px;transform-origin:0 50%;transform:scaleX(0.9533);">Dispose</div>
<div class="t" style="top:15.53px;font-size:12px;line-height:15px;color:#0A6A0A;font-weight:bold;left:1.5px;transform-origin:0 50%;transform:scaleX(0.9365);">Complete</div>
<div class="t" style="top:30.53px;font-size:12px;line-height:15px;color:#000;left:1.5px;transform-origin:0 50%;transform:scaleX(0.9170);">To Be Invoiced</div>
<div class="t" style="top:45.53px;font-size:12px;line-height:15px;color:#0A6A0A;font-weight:bold;left:1.5px;transform-origin:0 50%;transform:scaleX(0.9365);">Complete</div>
<div class="t" style="top:60.53px;font-size:12px;line-height:15px;color:#0A6A0A;font-weight:bold;left:1.5px;transform-origin:0 50%;transform:scaleX(0.9365);">Complete</div>
<div class="t" style="top:75.53px;font-size:12px;line-height:15px;color:#0A1270;font-weight:bold;left:1.5px;transform-origin:0 50%;transform:scaleX(0.9835);">Back Ordered</div>
<div class="t" style="top:90.53px;font-size:12px;line-height:15px;color:#0A6A0A;font-weight:bold;left:1.5px;transform-origin:0 50%;transform:scaleX(0.9365);">Complete</div>
<div class="t" style="top:105.53px;font-size:12px;line-height:15px;color:#6E0A0A;font-weight:bold;left:1.5px;transform-origin:0 50%;transform:scaleX(0.9948);">Parts Received</div>
<div class="t" style="top:120.53px;font-size:12px;line-height:15px;color:#0A1CA8;font-weight:bold;left:1.5px;transform-origin:0 50%;transform:scaleX(0.9634);">Pending</div>
<div class="t" style="top:135.53px;font-size:12px;line-height:15px;color:#6E0A74;font-weight:bold;left:1.5px;transform-origin:0 50%;transform:scaleX(0.9533);">Dispose</div>
<div class="t" style="top:150.53px;font-size:12px;line-height:15px;color:#0A6A0A;font-weight:bold;left:1.5px;transform-origin:0 50%;transform:scaleX(0.9365);">Complete</div>
<div class="t" style="top:165.53px;font-size:12px;line-height:15px;color:#0A6A0A;font-weight:bold;left:1.5px;transform-origin:0 50%;transform:scaleX(0.9365);">Complete</div>
<div class="t" style="top:180.53px;font-size:12px;line-height:15px;color:#F4F430;font-weight:bold;left:1.5px;transform-origin:0 50%;transform:scaleX(0.9849);">Waiting on Customer</div>
<div class="t" style="top:195.53px;font-size:12px;line-height:15px;color:#0A1CA8;font-weight:bold;left:1.5px;transform-origin:0 50%;transform:scaleX(0.9634);">Pending</div>
<div class="t" style="top:210.53px;font-size:12px;line-height:15px;color:#0A1270;font-weight:bold;left:1.5px;transform-origin:0 50%;transform:scaleX(0.9835);">Back Ordered</div>
<div class="t" style="top:225.53px;font-size:12px;line-height:15px;color:#6E0A0A;font-weight:bold;left:1.5px;transform-origin:0 50%;transform:scaleX(0.9948);">Parts Received</div>
<div class="t" style="top:240.53px;font-size:12px;line-height:15px;color:#0A1CA8;font-weight:bold;left:1.5px;transform-origin:0 50%;transform:scaleX(0.9634);">Pending</div>
<div class="t" style="top:255.53px;font-size:12px;line-height:15px;color:#B81C1C;font-weight:bold;left:1.5px;transform-origin:0 50%;transform:scaleX(0.9760);">Pre-Diagnose</div>
<div class="t" style="top:270.53px;font-size:12px;line-height:15px;color:#6E0A0A;font-weight:bold;left:1.5px;transform-origin:0 50%;transform:scaleX(0.9948);">Parts Received</div>
<div class="t" style="top:285.53px;font-size:12px;line-height:15px;color:#B81C1C;font-weight:bold;left:1.5px;transform-origin:0 50%;transform:scaleX(0.9760);">Pre-Diagnose</div>
<div class="t" style="top:300.53px;font-size:12px;line-height:15px;color:#0A1CA8;font-weight:bold;left:1.5px;transform-origin:0 50%;transform:scaleX(0.9634);">Pending</div>
<div class="t" style="top:315.53px;font-size:12px;line-height:15px;color:#0A6A0A;font-weight:bold;left:1.5px;transform-origin:0 50%;transform:scaleX(0.9365);">Complete</div>
<div class="t" style="top:330.53px;font-size:12px;line-height:15px;color:#0A6A0A;font-weight:bold;left:1.5px;transform-origin:0 50%;transform:scaleX(0.9365);">Complete</div>
<div class="t" style="top:345.53px;font-size:12px;line-height:15px;color:#0A6A0A;font-weight:bold;left:1.5px;transform-origin:0 50%;transform:scaleX(0.9365);">Complete</div>
<div class="t" style="top:360.53px;font-size:12px;line-height:15px;color:#0A6A0A;font-weight:bold;left:1.5px;transform-origin:0 50%;transform:scaleX(0.9365);">Complete</div>
</div>
<div class="a" style="left:202px;top:192px;width:75px;height:375px;overflow:hidden">
<div class="t" style="top:0.53px;font-size:12px;line-height:15px;color:#000;left:2.3px;transform-origin:0 50%;transform:scaleX(0.8850);">Work Order</div>
<div class="t" style="top:15.53px;font-size:12px;line-height:15px;color:#000;left:2.3px;transform-origin:0 50%;transform:scaleX(0.8850);">Work Order</div>
<div class="t" style="top:30.53px;font-size:12px;line-height:15px;color:#000;left:2.3px;transform-origin:0 50%;transform:scaleX(0.8850);">Work Order</div>
<div class="t" style="top:45.53px;font-size:12px;line-height:15px;color:#000;left:2.3px;transform-origin:0 50%;transform:scaleX(0.8850);">Work Order</div>
<div class="t" style="top:60.53px;font-size:12px;line-height:15px;color:#000;left:2.3px;transform-origin:0 50%;transform:scaleX(0.8850);">Work Order</div>
<div class="t" style="top:75.53px;font-size:12px;line-height:15px;color:#000;left:2.3px;transform-origin:0 50%;transform:scaleX(0.8850);">Work Order</div>
<div class="t" style="top:90.53px;font-size:12px;line-height:15px;color:#000;left:2.3px;transform-origin:0 50%;transform:scaleX(0.8850);">Work Order</div>
<div class="t" style="top:105.53px;font-size:12px;line-height:15px;color:#000;left:2.3px;transform-origin:0 50%;transform:scaleX(0.8850);">Work Order</div>
<div class="t" style="top:120.53px;font-size:12px;line-height:15px;color:#000;left:2.3px;transform-origin:0 50%;transform:scaleX(0.8850);">Work Order</div>
<div class="t" style="top:135.53px;font-size:12px;line-height:15px;color:#000;left:2.3px;transform-origin:0 50%;transform:scaleX(0.8850);">Work Order</div>
<div class="t" style="top:150.53px;font-size:12px;line-height:15px;color:#000;left:2.3px;transform-origin:0 50%;transform:scaleX(0.8850);">Work Order</div>
<div class="t" style="top:165.53px;font-size:12px;line-height:15px;color:#000;left:2.3px;transform-origin:0 50%;transform:scaleX(0.8850);">Work Order</div>
<div class="t" style="top:180.53px;font-size:12px;line-height:15px;color:#000;left:2.3px;transform-origin:0 50%;transform:scaleX(0.8850);">Work Order</div>
<div class="t" style="top:195.53px;font-size:12px;line-height:15px;color:#000;left:2.3px;transform-origin:0 50%;transform:scaleX(0.8850);">Work Order</div>
<div class="t" style="top:210.53px;font-size:12px;line-height:15px;color:#000;left:2.3px;transform-origin:0 50%;transform:scaleX(0.8850);">Work Order</div>
<div class="t" style="top:225.53px;font-size:12px;line-height:15px;color:#000;left:2.3px;transform-origin:0 50%;transform:scaleX(0.8850);">Work Order</div>
<div class="t" style="top:240.53px;font-size:12px;line-height:15px;color:#000;left:2.3px;transform-origin:0 50%;transform:scaleX(0.8850);">Work Order</div>
<div class="t" style="top:255.53px;font-size:12px;line-height:15px;color:#000;left:2.3px;transform-origin:0 50%;transform:scaleX(0.8850);">Work Order</div>
<div class="t" style="top:270.53px;font-size:12px;line-height:15px;color:#000;left:2.3px;transform-origin:0 50%;transform:scaleX(0.8850);">Work Order</div>
<div class="t" style="top:285.53px;font-size:12px;line-height:15px;color:#000;left:2.3px;transform-origin:0 50%;transform:scaleX(0.8850);">Work Order</div>
<div class="t" style="top:300.53px;font-size:12px;line-height:15px;color:#000;left:2.3px;transform-origin:0 50%;transform:scaleX(0.8850);">Work Order</div>
<div class="t" style="top:315.53px;font-size:12px;line-height:15px;color:#000;left:2.3px;transform-origin:0 50%;transform:scaleX(0.8850);">Work Order</div>
<div class="t" style="top:330.53px;font-size:12px;line-height:15px;color:#000;left:2.3px;transform-origin:0 50%;transform:scaleX(0.8850);">Work Order</div>
<div class="t" style="top:345.53px;font-size:12px;line-height:15px;color:#000;left:2.3px;transform-origin:0 50%;transform:scaleX(0.8850);">Work Order</div>
<div class="t" style="top:360.53px;font-size:12px;line-height:15px;color:#000;left:2.3px;transform-origin:0 50%;transform:scaleX(0.8850);">Work Order</div>
</div>
<div class="a" style="left:278px;top:192px;width:183px;height:375px;overflow:hidden">
<div class="t" style="top:0.53px;font-size:12px;line-height:15px;color:#000;left:1.2px;transform-origin:0 50%;transform:scaleX(0.8850);">BLAIRE, ALISON</div>
<div class="t" style="top:15.53px;font-size:12px;line-height:15px;color:#000;left:1.2px;transform-origin:0 50%;transform:scaleX(0.8850);">BLAZE, JOHNNY</div>
<div class="t" style="top:30.53px;font-size:12px;line-height:15px;color:#000;left:1.2px;transform-origin:0 50%;transform:scaleX(0.8850);">BOUVIER, SELMA</div>
<div class="t" style="top:45.53px;font-size:12px;line-height:15px;color:#000;left:1.2px;transform-origin:0 50%;transform:scaleX(0.8850);">BRATTON, CREED</div>
<div class="t" style="top:60.53px;font-size:12px;line-height:15px;color:#000;left:1.2px;transform-origin:0 50%;transform:scaleX(0.8850);">CASSIDY, SEAN</div>
<div class="t" style="top:75.53px;font-size:12px;line-height:15px;color:#000;left:1.2px;transform-origin:0 50%;transform:scaleX(0.8850);">CASTLE, FRANK</div>
<div class="t" style="top:90.53px;font-size:12px;line-height:15px;color:#000;left:1.2px;transform-origin:0 50%;transform:scaleX(0.8850);">CEDAR RAPIDS EAST ELEMENTARY</div>
<div class="t" style="top:105.53px;font-size:12px;line-height:15px;color:#000;left:1.2px;transform-origin:0 50%;transform:scaleX(0.8850);">CHALMERS, GARY</div>
<div class="t" style="top:120.53px;font-size:12px;line-height:15px;color:#000;left:1.2px;transform-origin:0 50%;transform:scaleX(0.8850);">CHALMERS, GARY</div>
<div class="t" style="top:135.53px;font-size:12px;line-height:15px;color:#000;left:1.2px;transform-origin:0 50%;transform:scaleX(0.8850);">CITY OF CEDAR RAPIDS</div>
<div class="t" style="top:150.53px;font-size:12px;line-height:15px;color:#000;left:1.2px;transform-origin:0 50%;transform:scaleX(0.8850);">CITY OF CEDAR RAPIDS</div>
<div class="t" style="top:165.53px;font-size:12px;line-height:15px;color:#000;left:1.2px;transform-origin:0 50%;transform:scaleX(0.8850);">COSTINGTONS</div>
<div class="t" style="top:180.53px;font-size:12px;line-height:15px;color:#fff;left:1.2px;transform-origin:0 50%;transform:scaleX(0.8850);">CURRY, ARTHUR</div>
<div class="t" style="top:195.53px;font-size:12px;line-height:15px;color:#000;left:1.2px;transform-origin:0 50%;transform:scaleX(0.8850);">DANE, LORNA</div>
<div class="t" style="top:210.53px;font-size:12px;line-height:15px;color:#000;left:1.2px;transform-origin:0 50%;transform:scaleX(0.8850);">DINGO JUNCTION</div>
<div class="t" style="top:225.53px;font-size:12px;line-height:15px;color:#000;left:1.2px;transform-origin:0 50%;transform:scaleX(0.8850);">DRAKE, TIM</div>
<div class="t" style="top:240.53px;font-size:12px;line-height:15px;color:#000;left:1.2px;transform-origin:0 50%;transform:scaleX(0.8850);">DUFF GARDENS</div>
<div class="t" style="top:255.53px;font-size:12px;line-height:15px;color:#000;left:1.2px;transform-origin:0 50%;transform:scaleX(0.8850);">DUFF GARDENS</div>
<div class="t" style="top:270.53px;font-size:12px;line-height:15px;color:#000;left:1.2px;transform-origin:0 50%;transform:scaleX(0.8850);">DUFF GARDENS</div>
<div class="t" style="top:285.53px;font-size:12px;line-height:15px;color:#000;left:1.2px;transform-origin:0 50%;transform:scaleX(0.8850);">DUFF GARDENS</div>
<div class="t" style="top:300.53px;font-size:12px;line-height:15px;color:#000;left:1.2px;transform-origin:0 50%;transform:scaleX(0.8850);">EMPLOYEE</div>
<div class="t" style="top:315.53px;font-size:12px;line-height:15px;color:#000;left:1.2px;transform-origin:0 50%;transform:scaleX(0.8850);">FERGISON, CLARICE</div>
<div class="t" style="top:330.53px;font-size:12px;line-height:15px;color:#000;left:1.2px;transform-origin:0 50%;transform:scaleX(0.8850);">FLANDERS, NED</div>
<div class="t" style="top:345.53px;font-size:12px;line-height:15px;color:#000;left:1.2px;transform-origin:0 50%;transform:scaleX(0.8850);">FRINK, JOHN</div>
<div class="t" style="top:360.53px;font-size:12px;line-height:15px;color:#000;left:1.2px;transform-origin:0 50%;transform:scaleX(0.8850);">GUMBLE, BARNEY</div>
</div>
<div class="a" style="left:462px;top:192px;width:63px;height:375px;overflow:hidden">
<div class="t" style="top:0.53px;font-size:12px;line-height:15px;color:#000;left:2.8px;transform-origin:0 50%;transform:scaleX(0.8850);">841</div>
<div class="t" style="top:15.53px;font-size:12px;line-height:15px;color:#000;left:2.8px;transform-origin:0 50%;transform:scaleX(0.8850);">831</div>
<div class="t" style="top:30.53px;font-size:12px;line-height:15px;color:#000;left:2.8px;transform-origin:0 50%;transform:scaleX(0.8850);">608</div>
<div class="t" style="top:45.53px;font-size:12px;line-height:15px;color:#000;left:2.8px;transform-origin:0 50%;transform:scaleX(0.8850);">P16</div>
<div class="t" style="top:60.53px;font-size:12px;line-height:15px;color:#000;left:2.8px;transform-origin:0 50%;transform:scaleX(0.8850);">670</div>
<div class="t" style="top:75.53px;font-size:12px;line-height:15px;color:#000;left:2.8px;transform-origin:0 50%;transform:scaleX(0.8850);">609</div>
<div class="t" style="top:90.53px;font-size:12px;line-height:15px;color:#000;left:2.8px;transform-origin:0 50%;transform:scaleX(0.8850);">P27</div>
<div class="t" style="top:105.53px;font-size:12px;line-height:15px;color:#000;left:2.8px;transform-origin:0 50%;transform:scaleX(0.8850);">545465</div>
<div class="t" style="top:120.53px;font-size:12px;line-height:15px;color:#000;left:2.8px;transform-origin:0 50%;transform:scaleX(0.8850);">15198</div>
<div class="t" style="top:135.53px;font-size:12px;line-height:15px;color:#000;left:2.8px;transform-origin:0 50%;transform:scaleX(0.8850);">667</div>
<div class="t" style="top:150.53px;font-size:12px;line-height:15px;color:#000;left:2.8px;transform-origin:0 50%;transform:scaleX(0.8850);">725</div>
<div class="t" style="top:165.53px;font-size:12px;line-height:15px;color:#000;left:2.8px;transform-origin:0 50%;transform:scaleX(0.8850);">827</div>
<div class="t" style="top:180.53px;font-size:12px;line-height:15px;color:#000;left:2.8px;transform-origin:0 50%;transform:scaleX(0.8850);">673</div>
<div class="t" style="top:195.53px;font-size:12px;line-height:15px;color:#000;left:2.8px;transform-origin:0 50%;transform:scaleX(0.8850);">669</div>
<div class="t" style="top:210.53px;font-size:12px;line-height:15px;color:#000;left:2.8px;transform-origin:0 50%;transform:scaleX(0.8850);">612</div>
<div class="t" style="top:225.53px;font-size:12px;line-height:15px;color:#000;left:2.8px;transform-origin:0 50%;transform:scaleX(0.8850);">828</div>
<div class="t" style="top:240.53px;font-size:12px;line-height:15px;color:#000;left:2.8px;transform-origin:0 50%;transform:scaleX(0.8850);">836</div>
<div class="t" style="top:255.53px;font-size:12px;line-height:15px;color:#000;left:2.8px;transform-origin:0 50%;transform:scaleX(0.8850);">863</div>
<div class="t" style="top:270.53px;font-size:12px;line-height:15px;color:#000;left:2.8px;transform-origin:0 50%;transform:scaleX(0.8850);">844</div>
<div class="t" style="top:285.53px;font-size:12px;line-height:15px;color:#000;left:2.8px;transform-origin:0 50%;transform:scaleX(0.8850);">691</div>
<div class="t" style="top:300.53px;font-size:12px;line-height:15px;color:#000;left:2.8px;transform-origin:0 50%;transform:scaleX(0.8850);">P24</div>
<div class="t" style="top:315.53px;font-size:12px;line-height:15px;color:#000;left:2.8px;transform-origin:0 50%;transform:scaleX(0.8850);">837</div>
<div class="t" style="top:330.53px;font-size:12px;line-height:15px;color:#000;left:2.8px;transform-origin:0 50%;transform:scaleX(0.8850);">858</div>
<div class="t" style="top:345.53px;font-size:12px;line-height:15px;color:#000;left:2.8px;transform-origin:0 50%;transform:scaleX(0.8850);">682</div>
<div class="t" style="top:360.53px;font-size:12px;line-height:15px;color:#000;left:2.8px;transform-origin:0 50%;transform:scaleX(0.8850);">819</div>
</div>
<div class="a" style="left:526px;top:192px;width:63px;height:375px;overflow:hidden">
<div class="t" style="top:0.53px;font-size:12px;line-height:15px;color:#000;left:1.1px;transform-origin:0 50%;transform:scaleX(0.8850);">Rick</div>
<div class="t" style="top:15.53px;font-size:12px;line-height:15px;color:#000;left:1.1px;transform-origin:0 50%;transform:scaleX(0.8850);">Andy</div>
<div class="t" style="top:30.53px;font-size:12px;line-height:15px;color:#000;left:1.1px;transform-origin:0 50%;transform:scaleX(0.8850);">Julia</div>
<div class="t" style="top:45.53px;font-size:12px;line-height:15px;color:#000;left:1.1px;transform-origin:0 50%;transform:scaleX(0.8850);">Julia</div>
<div class="t" style="top:60.53px;font-size:12px;line-height:15px;color:#000;left:1.1px;transform-origin:0 50%;transform:scaleX(0.8850);">Julia</div>
<div class="t" style="top:75.53px;font-size:12px;line-height:15px;color:#000;left:1.1px;transform-origin:0 50%;transform:scaleX(0.8850);">Kyle</div>
<div class="t" style="top:90.53px;font-size:12px;line-height:15px;color:#000;left:1.1px;transform-origin:0 50%;transform:scaleX(0.8850);">Rick</div>
<div class="t" style="top:105.53px;font-size:12px;line-height:15px;color:#000;left:1.1px;transform-origin:0 50%;transform:scaleX(0.8850);">Casey</div>
<div class="t" style="top:120.53px;font-size:12px;line-height:15px;color:#000;left:1.1px;transform-origin:0 50%;transform:scaleX(0.8850);">Bret</div>
<div class="t" style="top:135.53px;font-size:12px;line-height:15px;color:#000;left:1.1px;transform-origin:0 50%;transform:scaleX(0.8850);">Casey</div>
<div class="t" style="top:150.53px;font-size:12px;line-height:15px;color:#000;left:1.1px;transform-origin:0 50%;transform:scaleX(0.8850);">Mary</div>
<div class="t" style="top:165.53px;font-size:12px;line-height:15px;color:#000;left:1.1px;transform-origin:0 50%;transform:scaleX(0.8850);">Mary</div>
<div class="t" style="top:180.53px;font-size:12px;line-height:15px;color:#000;left:1.1px;transform-origin:0 50%;transform:scaleX(0.8850);">Rick</div>
<div class="t" style="top:195.53px;font-size:12px;line-height:15px;color:#000;left:1.1px;transform-origin:0 50%;transform:scaleX(0.8850);">Julia</div>
<div class="t" style="top:210.53px;font-size:12px;line-height:15px;color:#000;left:1.1px;transform-origin:0 50%;transform:scaleX(0.8850);">Mary</div>
<div class="t" style="top:225.53px;font-size:12px;line-height:15px;color:#000;left:1.1px;transform-origin:0 50%;transform:scaleX(0.8850);">Julia</div>
<div class="t" style="top:240.53px;font-size:12px;line-height:15px;color:#000;left:1.1px;transform-origin:0 50%;transform:scaleX(0.8850);">Julia</div>
<div class="t" style="top:255.53px;font-size:12px;line-height:15px;color:#000;left:1.1px;transform-origin:0 50%;transform:scaleX(0.8850);">Julia</div>
<div class="t" style="top:270.53px;font-size:12px;line-height:15px;color:#000;left:1.1px;transform-origin:0 50%;transform:scaleX(0.8850);">Julia</div>
<div class="t" style="top:285.53px;font-size:12px;line-height:15px;color:#000;left:1.1px;transform-origin:0 50%;transform:scaleX(0.8850);">Julia</div>
<div class="t" style="top:300.53px;font-size:12px;line-height:15px;color:#000;left:1.1px;transform-origin:0 50%;transform:scaleX(0.8850);">Kyle</div>
<div class="t" style="top:315.53px;font-size:12px;line-height:15px;color:#000;left:1.1px;transform-origin:0 50%;transform:scaleX(0.8850);">Andy</div>
<div class="t" style="top:330.53px;font-size:12px;line-height:15px;color:#000;left:1.1px;transform-origin:0 50%;transform:scaleX(0.8850);">Julia</div>
<div class="t" style="top:345.53px;font-size:12px;line-height:15px;color:#000;left:1.1px;transform-origin:0 50%;transform:scaleX(0.8850);">Rick</div>
<div class="t" style="top:360.53px;font-size:12px;line-height:15px;color:#000;left:1.1px;transform-origin:0 50%;transform:scaleX(0.8850);">Julia</div>
</div>
<div class="a" style="left:649px;top:192px;width:33px;height:375px;overflow:hidden">
<div class="t" style="top:0.53px;font-size:12px;line-height:15px;color:#000;left:1.8px;transform-origin:0 50%;transform:scaleX(0.8850);">STI</div>
<div class="t" style="top:15.53px;font-size:12px;line-height:15px;color:#000;left:1.8px;transform-origin:0 50%;transform:scaleX(0.8850);">MCL</div>
<div class="t" style="top:30.53px;font-size:12px;line-height:15px;color:#000;left:1.8px;transform-origin:0 50%;transform:scaleX(0.8850);">JD</div>
<div class="t" style="top:45.53px;font-size:12px;line-height:15px;color:#000;left:1.8px;transform-origin:0 50%;transform:scaleX(0.8850);">POL</div>
<div class="t" style="top:60.53px;font-size:12px;line-height:15px;color:#000;left:1.8px;transform-origin:0 50%;transform:scaleX(0.8850);">STI</div>
<div class="t" style="top:75.53px;font-size:12px;line-height:15px;color:#000;left:1.8px;transform-origin:0 50%;transform:scaleX(0.8850);">TOR</div>
<div class="t" style="top:90.53px;font-size:12px;line-height:15px;color:#000;left:1.8px;transform-origin:0 50%;transform:scaleX(0.8850);">POL</div>
<div class="t" style="top:105.53px;font-size:12px;line-height:15px;color:#000;left:1.8px;transform-origin:0 50%;transform:scaleX(0.8850);">MAR</div>
<div class="t" style="top:120.53px;font-size:12px;line-height:15px;color:#000;left:1.8px;transform-origin:0 50%;transform:scaleX(0.8850);">MAR</div>
<div class="t" style="top:135.53px;font-size:12px;line-height:15px;color:#000;left:1.8px;transform-origin:0 50%;transform:scaleX(0.8850);">JD</div>
<div class="t" style="top:150.53px;font-size:12px;line-height:15px;color:#000;left:1.8px;transform-origin:0 50%;transform:scaleX(0.8850);">BRS</div>
<div class="t" style="top:165.53px;font-size:12px;line-height:15px;color:#000;left:1.8px;transform-origin:0 50%;transform:scaleX(0.8850);">TOR</div>
<div class="t" style="top:180.53px;font-size:12px;line-height:15px;color:#000;left:1.8px;transform-origin:0 50%;transform:scaleX(0.8850);">HUS</div>
<div class="t" style="top:195.53px;font-size:12px;line-height:15px;color:#000;left:1.8px;transform-origin:0 50%;transform:scaleX(0.8850);">POL</div>
<div class="t" style="top:210.53px;font-size:12px;line-height:15px;color:#000;left:1.8px;transform-origin:0 50%;transform:scaleX(0.8850);">SCAG</div>
<div class="t" style="top:225.53px;font-size:12px;line-height:15px;color:#000;left:1.8px;transform-origin:0 50%;transform:scaleX(0.8850);">STI</div>
<div class="t" style="top:240.53px;font-size:12px;line-height:15px;color:#000;left:1.8px;transform-origin:0 50%;transform:scaleX(0.8850);">STI</div>
<div class="t" style="top:255.53px;font-size:12px;line-height:15px;color:#000;left:1.8px;transform-origin:0 50%;transform:scaleX(0.8850);">STI</div>
<div class="t" style="top:270.53px;font-size:12px;line-height:15px;color:#000;left:1.8px;transform-origin:0 50%;transform:scaleX(0.8850);">STI</div>
<div class="t" style="top:285.53px;font-size:12px;line-height:15px;color:#000;left:1.8px;transform-origin:0 50%;transform:scaleX(0.8850);">STI</div>
<div class="t" style="top:300.53px;font-size:12px;line-height:15px;color:#000;left:1.8px;transform-origin:0 50%;transform:scaleX(0.8850);">POL</div>
<div class="t" style="top:315.53px;font-size:12px;line-height:15px;color:#000;left:1.8px;transform-origin:0 50%;transform:scaleX(0.8850);">TOR</div>
<div class="t" style="top:330.53px;font-size:12px;line-height:15px;color:#000;left:1.8px;transform-origin:0 50%;transform:scaleX(0.8850);">ECHO</div>
<div class="t" style="top:345.53px;font-size:12px;line-height:15px;color:#000;left:1.8px;transform-origin:0 50%;transform:scaleX(0.8850);">GRA</div>
<div class="t" style="top:360.53px;font-size:12px;line-height:15px;color:#000;left:1.8px;transform-origin:0 50%;transform:scaleX(0.8850);">STI</div>
</div>
<div class="a" style="left:683px;top:192px;width:123px;height:375px;overflow:hidden">
<div class="t" style="top:0.53px;font-size:12px;line-height:15px;color:#000;left:1.1px;transform-origin:0 50%;transform:scaleX(0.8850);">MS180C</div>
<div class="t" style="top:15.53px;font-size:12px;line-height:15px;color:#000;left:1.1px;transform-origin:0 50%;transform:scaleX(0.8850);">2035RP7</div>
<div class="t" style="top:30.53px;font-size:12px;line-height:15px;color:#000;left:1.1px;transform-origin:0 50%;transform:scaleX(0.8850);">HD45</div>
<div class="t" style="top:45.53px;font-size:12px;line-height:15px;color:#000;left:1.1px;transform-origin:0 50%;transform:scaleX(0.8850);">A04CH42AA</div>
<div class="t" style="top:60.53px;font-size:12px;line-height:15px;color:#000;left:1.1px;transform-origin:0 50%;transform:scaleX(0.8850);">HC1600</div>
<div class="t" style="top:75.53px;font-size:12px;line-height:15px;color:#000;left:1.1px;transform-origin:0 50%;transform:scaleX(0.8850);">20091</div>
<div class="t" style="top:90.53px;font-size:12px;line-height:15px;color:#000;left:1.1px;transform-origin:0 50%;transform:scaleX(0.8850);">A05MH50AA</div>
<div class="t" style="top:105.53px;font-size:12px;line-height:15px;color:#000;left:1.1px;transform-origin:0 50%;transform:scaleX(0.8850);">MS036</div>
<div class="t" style="top:120.53px;font-size:12px;line-height:15px;color:#000;left:1.1px;transform-origin:0 50%;transform:scaleX(0.8850);">MS036</div>
<div class="t" style="top:135.53px;font-size:12px;line-height:15px;color:#000;left:1.1px;transform-origin:0 50%;transform:scaleX(0.8850);">790</div>
<div class="t" style="top:150.53px;font-size:12px;line-height:15px;color:#000;left:1.1px;transform-origin:0 50%;transform:scaleX(0.8850);">30208</div>
<div class="t" style="top:165.53px;font-size:12px;line-height:15px;color:#000;left:1.1px;transform-origin:0 50%;transform:scaleX(0.8850);">74417</div>
<div class="t" style="top:180.53px;font-size:12px;line-height:15px;color:#000;left:1.1px;transform-origin:0 50%;transform:scaleX(0.8850);">968999512</div>
<div class="t" style="top:195.53px;font-size:12px;line-height:15px;color:#000;left:1.1px;transform-origin:0 50%;transform:scaleX(0.8850);">R07RH50AF</div>
<div class="t" style="top:210.53px;font-size:12px;line-height:15px;color:#000;left:1.1px;transform-origin:0 50%;transform:scaleX(0.8850);">STWC61V-30CV</div>
<div class="t" style="top:225.53px;font-size:12px;line-height:15px;color:#000;left:1.1px;transform-origin:0 50%;transform:scaleX(0.8850);">BR550</div>
<div class="t" style="top:240.53px;font-size:12px;line-height:15px;color:#000;left:1.1px;transform-origin:0 50%;transform:scaleX(0.8850);">MS192T-16</div>
<div class="t" style="top:255.53px;font-size:12px;line-height:15px;color:#000;left:1.1px;transform-origin:0 50%;transform:scaleX(0.8850);">MS192T-16</div>
<div class="t" style="top:270.53px;font-size:12px;line-height:15px;color:#000;left:1.1px;transform-origin:0 50%;transform:scaleX(0.8850);">MS192T-16</div>
<div class="t" style="top:285.53px;font-size:12px;line-height:15px;color:#000;left:1.1px;transform-origin:0 50%;transform:scaleX(0.8850);">MS310-20</div>
<div class="t" style="top:300.53px;font-size:12px;line-height:15px;color:#000;left:1.1px;transform-origin:0 50%;transform:scaleX(0.8850);">400</div>
<div class="t" style="top:315.53px;font-size:12px;line-height:15px;color:#000;left:1.1px;transform-origin:0 50%;transform:scaleX(0.8850);">20106</div>
<div class="t" style="top:330.53px;font-size:12px;line-height:15px;color:#000;left:1.1px;transform-origin:0 50%;transform:scaleX(0.8850);">SRM2100</div>
<div class="t" style="top:345.53px;font-size:12px;line-height:15px;color:#000;left:1.1px;transform-origin:0 50%;transform:scaleX(0.8850);">991016</div>
<div class="t" style="top:360.53px;font-size:12px;line-height:15px;color:#000;left:1.1px;transform-origin:0 50%;transform:scaleX(0.8850);">FS80R</div>
</div>
<div class="a" style="left:807px;top:192px;width:107px;height:375px;overflow:hidden">
<div class="t" style="top:0.53px;font-size:12px;line-height:15px;color:#000;left:3px;transform-origin:0 50%;transform:scaleX(0.8850);">267777945</div>
<div class="t" style="top:15.53px;font-size:12px;line-height:15px;color:#000;left:3px;transform-origin:0 50%;transform:scaleX(0.8850);">620570</div>
<div class="t" style="top:30.53px;font-size:12px;line-height:15px;color:#000;left:3px;transform-origin:0 50%;transform:scaleX(0.8850);">M0HD45010790</div>
<div class="t" style="top:45.53px;font-size:12px;line-height:15px;color:#000;left:3px;transform-origin:0 50%;transform:scaleX(0.8850);">4XACH42A04A010523</div>
<div class="t" style="top:60.53px;font-size:12px;line-height:15px;color:#000;left:3px;transform-origin:0 50%;transform:scaleX(0.8850);">032479</div>
<div class="t" style="top:75.53px;font-size:12px;line-height:15px;color:#000;left:3px;transform-origin:0 50%;transform:scaleX(0.8850);">280003497</div>
<div class="t" style="top:90.53px;font-size:12px;line-height:15px;color:#000;left:3px;transform-origin:0 50%;transform:scaleX(0.8850);">4XAMH50A95B41746</div>
<div class="t" style="top:105.53px;font-size:12px;line-height:15px;color:#000;left:3px;transform-origin:0 50%;transform:scaleX(0.8850);">121251</div>
<div class="t" style="top:120.53px;font-size:12px;line-height:15px;color:#000;left:3px;transform-origin:0 50%;transform:scaleX(0.8850);">121251</div>
<div class="t" style="top:135.53px;font-size:12px;line-height:15px;color:#000;left:3px;transform-origin:0 50%;transform:scaleX(0.8850);">LV0790G992654</div>
<div class="t" style="top:150.53px;font-size:12px;line-height:15px;color:#000;left:3px;transform-origin:0 50%;transform:scaleX(0.8850);">1012529924</div>
<div class="t" style="top:165.53px;font-size:12px;line-height:15px;color:#000;left:3px;transform-origin:0 50%;transform:scaleX(0.8850);">250000760</div>
<div class="t" style="top:180.53px;font-size:12px;line-height:15px;color:#000;left:3px;transform-origin:0 50%;transform:scaleX(0.8850);">072127253</div>
<div class="t" style="top:195.53px;font-size:12px;line-height:15px;color:#000;left:3px;transform-origin:0 50%;transform:scaleX(0.8850);">4XARH50A972364597</div>
<div class="t" style="top:210.53px;font-size:12px;line-height:15px;color:#000;left:3px;transform-origin:0 50%;transform:scaleX(0.8850);">BS800157</div>
<div class="t" style="top:225.53px;font-size:12px;line-height:15px;color:#000;left:3px;transform-origin:0 50%;transform:scaleX(0.8850);">266575752</div>
<div class="t" style="top:240.53px;font-size:12px;line-height:15px;color:#000;left:3px;transform-origin:0 50%;transform:scaleX(0.8850);">276302186</div>
<div class="t" style="top:255.53px;font-size:12px;line-height:15px;color:#000;left:3px;transform-origin:0 50%;transform:scaleX(0.8850);">276302309</div>
<div class="t" style="top:270.53px;font-size:12px;line-height:15px;color:#000;left:3px;transform-origin:0 50%;transform:scaleX(0.8850);">276302713</div>
<div class="t" style="top:285.53px;font-size:12px;line-height:15px;color:#000;left:3px;transform-origin:0 50%;transform:scaleX(0.8850);">270431675</div>
<div class="t" style="top:300.53px;font-size:12px;line-height:15px;color:#000;left:3px;transform-origin:0 50%;transform:scaleX(0.8850);">AXACH42A24A32906</div>
<div class="t" style="top:315.53px;font-size:12px;line-height:15px;color:#000;left:3px;transform-origin:0 50%;transform:scaleX(0.8850);">1008065</div>
<div class="t" style="top:330.53px;font-size:12px;line-height:15px;color:#000;left:3px;transform-origin:0 50%;transform:scaleX(0.8850);">693675</div>
<div class="t" style="top:345.53px;font-size:12px;line-height:15px;color:#000;left:3px;transform-origin:0 50%;transform:scaleX(0.8850);">000832</div>
<div class="t" style="top:360.53px;font-size:12px;line-height:15px;color:#000;left:3px;transform-origin:0 50%;transform:scaleX(0.8850);">272123872</div>
</div>
<div class="t" style="top:192.53px;font-size:12px;line-height:15px;left:310px;width:300px;text-align:right;transform-origin:100% 50%;transform:scaleX(0.8850);">5</div>
<div class="t" style="top:207.53px;font-size:12px;line-height:15px;left:310px;width:300px;text-align:right;transform-origin:100% 50%;transform:scaleX(0.8850);">1</div>
<div class="t" style="top:222.53px;font-size:12px;line-height:15px;left:310px;width:300px;text-align:right;transform-origin:100% 50%;transform:scaleX(0.8850);">1</div>
<div class="t" style="top:237.53px;font-size:12px;line-height:15px;left:310px;width:300px;text-align:right;transform-origin:100% 50%;transform:scaleX(0.8850);">1</div>
<div class="t" style="top:252.53px;font-size:12px;line-height:15px;left:310px;width:300px;text-align:right;transform-origin:100% 50%;transform:scaleX(0.8850);">1</div>
<div class="t" style="top:267.53px;font-size:12px;line-height:15px;left:310px;width:300px;text-align:right;transform-origin:100% 50%;transform:scaleX(0.8850);">2</div>
<div class="t" style="top:282.53px;font-size:12px;line-height:15px;left:310px;width:300px;text-align:right;transform-origin:100% 50%;transform:scaleX(0.8850);">1</div>
<div class="t" style="top:297.53px;font-size:12px;line-height:15px;left:310px;width:300px;text-align:right;transform-origin:100% 50%;transform:scaleX(0.8850);">1</div>
<div class="t" style="top:312.53px;font-size:12px;line-height:15px;left:310px;width:300px;text-align:right;transform-origin:100% 50%;transform:scaleX(0.8850);">3</div>
<div class="t" style="top:327.53px;font-size:12px;line-height:15px;left:310px;width:300px;text-align:right;transform-origin:100% 50%;transform:scaleX(0.8850);">5</div>
<div class="t" style="top:342.53px;font-size:12px;line-height:15px;left:310px;width:300px;text-align:right;transform-origin:100% 50%;transform:scaleX(0.8850);">1</div>
<div class="t" style="top:357.53px;font-size:12px;line-height:15px;left:310px;width:300px;text-align:right;transform-origin:100% 50%;transform:scaleX(0.8850);">1</div>
<div class="t" style="top:372.53px;font-size:12px;line-height:15px;left:310px;width:300px;text-align:right;transform-origin:100% 50%;transform:scaleX(0.8850);">2</div>
<div class="t" style="top:387.53px;font-size:12px;line-height:15px;left:310px;width:300px;text-align:right;transform-origin:100% 50%;transform:scaleX(0.8850);">1</div>
<div class="t" style="top:402.53px;font-size:12px;line-height:15px;left:310px;width:300px;text-align:right;transform-origin:100% 50%;transform:scaleX(0.8850);">1</div>
<div class="t" style="top:417.53px;font-size:12px;line-height:15px;left:310px;width:300px;text-align:right;transform-origin:100% 50%;transform:scaleX(0.8850);">1</div>
<div class="t" style="top:432.53px;font-size:12px;line-height:15px;left:310px;width:300px;text-align:right;transform-origin:100% 50%;transform:scaleX(0.8850);">1</div>
<div class="t" style="top:447.53px;font-size:12px;line-height:15px;left:310px;width:300px;text-align:right;transform-origin:100% 50%;transform:scaleX(0.8850);">1</div>
<div class="t" style="top:462.53px;font-size:12px;line-height:15px;left:310px;width:300px;text-align:right;transform-origin:100% 50%;transform:scaleX(0.8850);">1</div>
<div class="t" style="top:477.53px;font-size:12px;line-height:15px;left:310px;width:300px;text-align:right;transform-origin:100% 50%;transform:scaleX(0.8850);">1</div>
<div class="t" style="top:492.53px;font-size:12px;line-height:15px;left:310px;width:300px;text-align:right;transform-origin:100% 50%;transform:scaleX(0.8850);">1</div>
<div class="t" style="top:507.53px;font-size:12px;line-height:15px;left:310px;width:300px;text-align:right;transform-origin:100% 50%;transform:scaleX(0.8850);">1</div>
<div class="t" style="top:522.53px;font-size:12px;line-height:15px;left:310px;width:300px;text-align:right;transform-origin:100% 50%;transform:scaleX(0.8850);">1</div>
<div class="t" style="top:537.53px;font-size:12px;line-height:15px;left:310px;width:300px;text-align:right;transform-origin:100% 50%;transform:scaleX(0.8850);">1</div>
<div class="t" style="top:552.53px;font-size:12px;line-height:15px;left:310px;width:300px;text-align:right;transform-origin:100% 50%;transform:scaleX(0.8850);">1</div>
<div class="a" style="left:914px;top:172px;width:18px;height:402px;background:linear-gradient(to right,#F1EFE6 0,#FBFBF8 30%,#FFFFFF 55%,#F7F6F0 85%,#F0EEE4 100%);"></div>
<div class="a" style="left:11px;top:568px;width:903px;height:24px;background:linear-gradient(to bottom,#DDDACB 0,#ECE9DC 10%,#F5F3EA 28%,#FDFDFA 48%,#FFFFFF 62%,#FAF9F4 85%,#F1EFE4 100%);"></div>
<div class="a" style="left:914px;top:574px;width:18px;height:18px;background:#EEECDF;"></div>
<div class="a" style="left:916px;top:173px;width:13px;height:15px;border-radius:2px;border:1px solid #fff;background:linear-gradient(135deg,#C9D8FC 0%,#BCCDFA 50%,#AEC0F4 100%);box-shadow:0 0 0 1px #B8C8F0 inset, 1px 1px 0 #9AAEE0"></div>
<svg style="left:916px;top:173px" width="13" height="15" viewBox="0 0 13 15"><path d="M3 9.4 L6.5 5.8 L10 9.4" fill="none" stroke="#44587E" stroke-width="2.3"/></svg>
<div class="a" style="left:916px;top:558px;width:13px;height:15px;border-radius:2px;border:1px solid #fff;background:linear-gradient(135deg,#C9D8FC 0%,#BCCDFA 50%,#AEC0F4 100%);box-shadow:0 0 0 1px #B8C8F0 inset, 1px 1px 0 #9AAEE0"></div>
<svg style="left:916px;top:558px" width="13" height="15" viewBox="0 0 13 15"><path d="M3 5.8 L6.5 9.4 L10 5.8" fill="none" stroke="#44587E" stroke-width="2.3"/></svg>
<div class="a" style="left:916px;top:366px;width:13px;height:15px;border-radius:2px;border:1px solid #fff;background:linear-gradient(135deg,#C9D8FC 0%,#BCCDFA 50%,#AEC0F4 100%);box-shadow:0 0 0 1px #B8C8F0 inset, 1px 1px 0 #9AAEE0"></div>
<svg style="left:916px;top:366px" width="13" height="15" viewBox="0 0 13 15"><path d="M4 4.5 H10 M4 6.5 H10 M4 8.5 H10 M4 10.5 H10" stroke="#EEF4FE" stroke-width="1"/><path d="M4 5.5 H10 M4 7.5 H10 M4 9.5 H10" stroke="#8CA0D8" stroke-width=".6"/></svg>
<div class="a" style="left:12px;top:576px;width:14px;height:14px;border-radius:2px;border:1px solid #fff;background:linear-gradient(135deg,#C9D8FC 0%,#BCCDFA 50%,#AEC0F4 100%);box-shadow:0 0 0 1px #B8C8F0 inset, 1px 1px 0 #9AAEE0"></div>
<svg style="left:12px;top:576px" width="14" height="14" viewBox="0 0 14 14"><path d="M9 3.2 L5.2 7 L9 10.8" fill="none" stroke="#44587E" stroke-width="2.3"/></svg>
<div class="a" style="left:898px;top:576px;width:14px;height:14px;border-radius:2px;border:1px solid #fff;background:linear-gradient(135deg,#C9D8FC 0%,#BCCDFA 50%,#AEC0F4 100%);box-shadow:0 0 0 1px #B8C8F0 inset, 1px 1px 0 #9AAEE0"></div>
<svg style="left:898px;top:576px" width="14" height="14" viewBox="0 0 14 14"><path d="M5.2 3.2 L9 7 L5.2 10.8" fill="none" stroke="#44587E" stroke-width="2.3"/></svg>
<div class="a" style="left:29px;top:576px;width:15px;height:14px;border-radius:2px;border:1px solid #fff;background:linear-gradient(135deg,#C9D8FC 0%,#BCCDFA 50%,#AEC0F4 100%);box-shadow:0 0 0 1px #B8C8F0 inset, 1px 1px 0 #9AAEE0"></div>
<svg style="left:29px;top:576px" width="15" height="14" viewBox="0 0 15 14"><path d="M4.5 4 V10 M6.5 4 V10 M8.5 4 V10 M10.5 4 V10" stroke="#EEF4FE" stroke-width="1"/><path d="M5.5 4 V10 M7.5 4 V10 M9.5 4 V10" stroke="#8CA0D8" stroke-width=".6"/></svg>
<div class="btn" style="left:9px;top:602px;width:104px;height:24px"></div>
<div class="btn" style="left:118px;top:602px;width:104px;height:24px"></div>
<div class="btn" style="left:227px;top:602px;width:121px;height:24px"></div>
<div class="btn" style="left:839px;top:602px;width:94px;height:24px"></div>
<svg style="left:17px;top:605px" width="18" height="18" viewBox="0 0 18 18"><path d="M7.5 1.5 H13.5 L16.5 4.5 V16 H7.5 Z" fill="#fff" stroke="#000" stroke-width="1"/><path d="M13.5 1.5 V4.5 H16.5" fill="none" stroke="#000" stroke-width="1"/>
<path d="M10 4.5 H12 M12.5 7.5 H14.5 M11.5 13.5 H14.5 M9.5 15 H11 M13 10.5 H14.5" stroke="#000" stroke-width="1"/>
<path d="M2.5 8 Q1.2 8.4 1.6 11 Q1.4 13.6 2.8 14.2 L6.5 14.2 Q8.5 13 8.4 10.6 Q8.4 8.4 6.5 8 Z" fill="#E6EA62"/>
<path d="M1.5 7.5 V14.5" stroke="#000" stroke-width="1.2"/>
<path d="M5.5 8.4 H10 M6.5 11 H10.5 M5.5 13.4 H9.5 M3 14.6 H6" stroke="#000" stroke-width="1"/>
<path d="M3.5 1.5 L14.6 12.6" stroke="#000" stroke-width="1.9"/><path d="M5 2.4 L8.4 5.8 M10 8 L12.4 10.4" stroke="#fff" stroke-width=".6"/></svg>
<div class="t" style="top:607.83px;font-size:12px;line-height:15px;left:38.4px;transform-origin:0 50%;transform:scaleX(0.8511);">Edit</div>
<div class="t" style="top:607.83px;font-size:12px;line-height:15px;left:92px;transform-origin:0 50%;transform:scaleX(0.8570);">F8</div>
<svg style="left:128px;top:607px" width="13" height="13" viewBox="0 0 13 13"><path d="M6.5 0.5 V12.5 M0.5 6.5 H12.5" stroke="#1C8C1C" stroke-width="3.4"/></svg>
<div class="t" style="top:607.83px;font-size:12px;line-height:15px;left:147px;transform-origin:0 50%;transform:scaleX(0.9165);">New</div>
<div class="t" style="top:607.83px;font-size:12px;line-height:15px;left:199px;transform-origin:0 50%;transform:scaleX(0.8746);">Ins</div>
<div class="a" style="left:241px;top:612px;width:13px;height:3px;background:#D01818;"></div>
<div class="t" style="top:607.83px;font-size:12px;line-height:15px;left:260px;transform-origin:0 50%;transform:scaleX(0.8937);">Delete</div>
<div class="t" style="top:607.83px;font-size:12px;line-height:15px;left:300.5px;transform-origin:0 50%;transform:scaleX(0.8472);">Ctrl+Del</div>
<div class="t" style="top:607.83px;font-size:12px;line-height:15px;left:736px;width:300px;text-align:center;transform-origin:50% 50%;transform:scaleX(0.8801);">Close</div>
<div class="a" style="left:6px;top:633px;width:125px;height:22px;background:#ECE9D8;border:1px solid;border-color:#fff #D8D4C0 #C8C4B0 #fff;border-radius:2px 0 0 2px"></div>
<div class="t" style="top:635.73px;font-size:12px;line-height:15px;left:13.4px;transform-origin:0 50%;transform:scaleX(0.8850);">Welcome to Ideal for ...</div>
<div class="a" style="left:131px;top:631px;width:128px;height:26px;background:#0A50DC;border-left:1px solid #6C9CF0;border-top:1px solid #5C8CE8;border-right:1px solid #002C8C;border-radius:2px 2px 0 0;"></div>
<div class="t" style="top:636.53px;font-size:12px;line-height:15px;color:#fff;left:45px;width:300px;text-align:center;transform-origin:50% 50%;transform:scaleX(0.8568);">Sales Orders</div>
<div class="t" style="top:661.03px;font-size:12px;line-height:15px;left:5.6px;transform-origin:0 50%;transform:scaleX(0.8707);">Your Company Name</div>
<div class="a" style="left:824px;top:661px;width:58px;height:16px;border:1px solid;border-color:#ACA899 #fff #fff #ACA899"></div>
<div class="a" style="left:884px;top:661px;width:54px;height:16px;border:1px solid;border-color:#ACA899 #fff #fff #ACA899"></div>
<div class="t" style="top:661.03px;font-size:12px;line-height:15px;left:826.4px;transform-origin:0 50%;transform:scaleX(0.9224);">Ideal</div>
<div class="t" style="top:661.03px;font-size:12px;line-height:15px;left:886.9px;transform-origin:0 50%;transform:scaleX(0.9299);">4/25/11</div>
</div></body></html>
